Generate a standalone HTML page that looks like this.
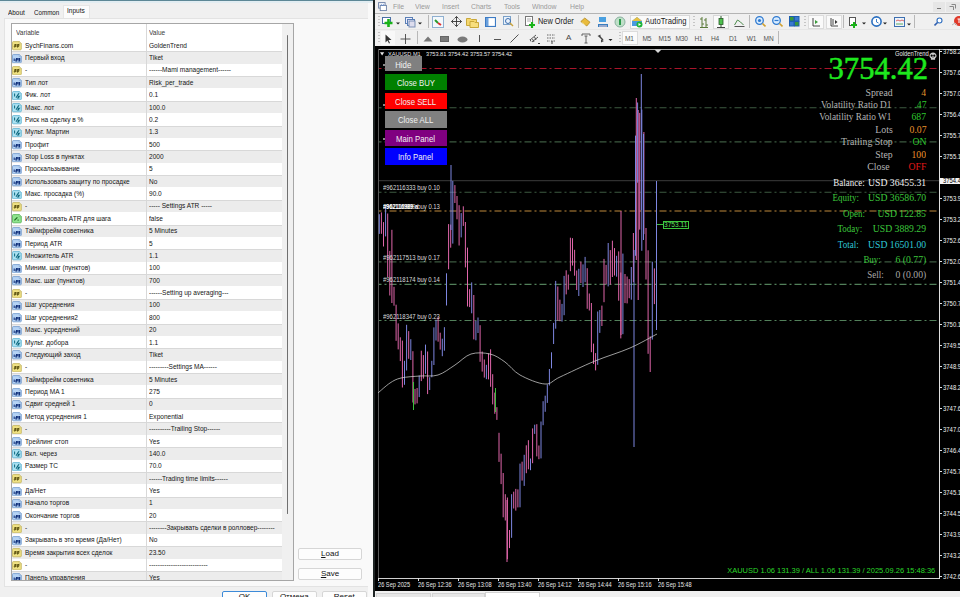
<!DOCTYPE html><html><head><meta charset="utf-8"><style>
*{margin:0;padding:0;box-sizing:border-box}
html,body{width:960px;height:597px;overflow:hidden;background:#f0f0f0;font-family:"Liberation Sans",sans-serif;}
.a{position:absolute;white-space:nowrap}
.t{position:absolute;white-space:nowrap;font-size:7.4px;color:#1e1e1e;line-height:12px}
.ic{position:absolute;width:10px;height:9px;border-radius:1.5px}
.btn{position:absolute;border:1px solid #d6d6d6;border-radius:2px;background:#fdfdfd;font-size:8px;color:#111;text-align:center}
.mb{position:absolute;top:2.2px;font-size:8px;line-height:9px;color:#9a9a9a;transform:scaleX(0.86);transform-origin:0 0}
.cb{position:absolute;color:#fff;font-size:8.4px;text-align:center;line-height:15px}
.pl{position:absolute;left:943px;font-size:7px;color:#e8e8e8;line-height:8px}
.tl{position:absolute;top:581px;font-size:7px;color:#e8e8e8;line-height:8px}
.r{position:absolute;font-family:"Liberation Serif",serif;font-size:10.5px;line-height:12px;text-align:right}
</style></head><body>

<div class="a" style="left:0;top:0;width:373px;height:597px;background:#f0f0f0">
<div class="a" style="left:0;top:0;width:373px;height:1px;background:#5d8796"></div>
<div class="a" style="left:0;top:1px;width:373px;height:2px;background:#e2edf2"></div>
<div class="a" style="left:63px;top:5px;width:27px;height:14px;background:#fbfbfb;border:1px solid #e6e6e6;border-bottom:none"></div>
<div class="a" style="left:8.00px;top:9.33px;font-size:8px;line-height:8px;color:#151515;transform:scaleX(0.8);transform-origin:0 0">About</div>
<div class="a" style="left:33.75px;top:9.33px;font-size:8px;line-height:8px;color:#151515;transform:scaleX(0.78);transform-origin:0 0">Common</div>
<div class="a" style="left:67.00px;top:7.43px;font-size:8px;line-height:8px;color:#151515;transform:scaleX(0.82);transform-origin:0 0">Inputs</div>
<div class="a" style="left:4px;top:18px;width:366px;height:569px;background:#f9f9f9;border:1px solid #e3e3e3"></div>
<div class="a" style="left:10.6px;top:23px;width:283.4px;height:558px;background:#fff;border:1px solid #a6a6a6;overflow:hidden">
<div class="a" style="left:4.00px;top:5.08px;font-size:7.7px;line-height:7.7px;color:#3a3a3a;transform:scaleX(0.85);transform-origin:0 0">Variable</div>
<div class="a" style="left:137.20px;top:5.08px;font-size:7.7px;line-height:7.7px;color:#3a3a3a;transform:scaleX(0.85);transform-origin:0 0">Value</div>
<svg class="a" style="left:0.60px;top:17.20px" width="10" height="9.5" viewBox="0 0 10 9.5"><path d="M1.3 0.6h6.2l1.8 1.8v5.6c0 .5-.3.8-.8.8H1.3c-.5 0-.8-.3-.8-.8V1.4c0-.5.3-.8.8-.8z" fill="#efe283" stroke="#c2b25a" stroke-width="0.8"/><path d="M7.3 0.7v1.9h1.9" fill="#fff" stroke="#c2b25a" stroke-width="0.6"/><path d="M2.4 3.6h1.4l-1.2 1.3h1.2l-1.4 1.4M5.2 3.6h1.4l-1.2 1.3h1.2l-1.4 1.4" stroke="#5e5412" stroke-width="1.05" fill="none"/></svg>
<div class="a" style="left:13.40px;top:17.68px;font-size:7.7px;line-height:7.7px;color:#151515;transform:scaleX(0.85);transform-origin:0 0">SychFinans.com</div>
<div class="a" style="left:137.00px;top:17.68px;font-size:7.7px;line-height:7.7px;color:#151515;transform:scaleX(0.85);transform-origin:0 0">GoldenTrend</div>
<div class="a" style="left:0;top:27.37px;width:271px;height:12.37px;background:#ececec;border-top:1px solid #d8d8d8"></div>
<svg class="a" style="left:0.60px;top:29.57px" width="10" height="9.5" viewBox="0 0 10 9.5"><path d="M1.3 0.6h6.2l1.8 1.8v5.6c0 .5-.3.8-.8.8H1.3c-.5 0-.8-.3-.8-.8V1.4c0-.5.3-.8.8-.8z" fill="#b5d3f5" stroke="#6f98cc" stroke-width="0.8"/><path d="M7.3 0.7v1.9h1.9" fill="#fff" stroke="#6f98cc" stroke-width="0.6"/><path d="M2.2 4.6v2.4M3.9 4.6h1.4v1.2h-1.4v1.2h1.4M6.3 4.6h1.4v2.4h-1.4M6.3 5.8h1.4" stroke="#10307a" stroke-width="1.05" fill="none"/></svg>
<div class="a" style="left:13.40px;top:30.05px;font-size:7.7px;line-height:7.7px;color:#151515;transform:scaleX(0.85);transform-origin:0 0">Первый вход</div>
<div class="a" style="left:137.00px;top:30.05px;font-size:7.7px;line-height:7.7px;color:#151515;transform:scaleX(0.85);transform-origin:0 0">Tiket</div>
<svg class="a" style="left:0.60px;top:41.94px" width="10" height="9.5" viewBox="0 0 10 9.5"><path d="M1.3 0.6h6.2l1.8 1.8v5.6c0 .5-.3.8-.8.8H1.3c-.5 0-.8-.3-.8-.8V1.4c0-.5.3-.8.8-.8z" fill="#efe283" stroke="#c2b25a" stroke-width="0.8"/><path d="M7.3 0.7v1.9h1.9" fill="#fff" stroke="#c2b25a" stroke-width="0.6"/><path d="M2.4 3.6h1.4l-1.2 1.3h1.2l-1.4 1.4M5.2 3.6h1.4l-1.2 1.3h1.2l-1.4 1.4" stroke="#5e5412" stroke-width="1.05" fill="none"/></svg>
<div class="a" style="left:13.40px;top:42.42px;font-size:7.7px;line-height:7.7px;color:#151515;transform:scaleX(0.85);transform-origin:0 0">-</div>
<div class="a" style="left:137.00px;top:42.42px;font-size:7.7px;line-height:7.7px;color:#151515;transform:scaleX(0.85);transform-origin:0 0">------Mami management------</div>
<div class="a" style="left:0;top:52.11px;width:271px;height:12.37px;background:#ececec;border-top:1px solid #d8d8d8"></div>
<svg class="a" style="left:0.60px;top:54.31px" width="10" height="9.5" viewBox="0 0 10 9.5"><path d="M1.3 0.6h6.2l1.8 1.8v5.6c0 .5-.3.8-.8.8H1.3c-.5 0-.8-.3-.8-.8V1.4c0-.5.3-.8.8-.8z" fill="#b5d3f5" stroke="#6f98cc" stroke-width="0.8"/><path d="M7.3 0.7v1.9h1.9" fill="#fff" stroke="#6f98cc" stroke-width="0.6"/><path d="M2.2 4.6v2.4M3.9 4.6h1.4v1.2h-1.4v1.2h1.4M6.3 4.6h1.4v2.4h-1.4M6.3 5.8h1.4" stroke="#10307a" stroke-width="1.05" fill="none"/></svg>
<div class="a" style="left:13.40px;top:54.79px;font-size:7.7px;line-height:7.7px;color:#151515;transform:scaleX(0.85);transform-origin:0 0">Тип лот</div>
<div class="a" style="left:137.00px;top:54.79px;font-size:7.7px;line-height:7.7px;color:#151515;transform:scaleX(0.85);transform-origin:0 0">Risk_per_trade</div>
<svg class="a" style="left:0.60px;top:66.68px" width="10" height="9.5" viewBox="0 0 10 9.5"><path d="M1.3 0.6h6.2l1.8 1.8v5.6c0 .5-.3.8-.8.8H1.3c-.5 0-.8-.3-.8-.8V1.4c0-.5.3-.8.8-.8z" fill="#ace2f2" stroke="#58b0d0" stroke-width="0.8"/><path d="M7.3 0.7v1.9h1.9" fill="#fff" stroke="#58b0d0" stroke-width="0.6"/><path d="M2.6 2.6v3M4 6.8l2.8-4.4M5.8 5.2h1.6l-1.6 1.8h1.6" stroke="#0f6a80" stroke-width="1.05" fill="none"/></svg>
<div class="a" style="left:13.40px;top:67.16px;font-size:7.7px;line-height:7.7px;color:#151515;transform:scaleX(0.85);transform-origin:0 0">Фик. лот</div>
<div class="a" style="left:137.00px;top:67.16px;font-size:7.7px;line-height:7.7px;color:#151515;transform:scaleX(0.85);transform-origin:0 0">0.1</div>
<div class="a" style="left:0;top:76.85px;width:271px;height:12.37px;background:#ececec;border-top:1px solid #d8d8d8"></div>
<svg class="a" style="left:0.60px;top:79.05px" width="10" height="9.5" viewBox="0 0 10 9.5"><path d="M1.3 0.6h6.2l1.8 1.8v5.6c0 .5-.3.8-.8.8H1.3c-.5 0-.8-.3-.8-.8V1.4c0-.5.3-.8.8-.8z" fill="#ace2f2" stroke="#58b0d0" stroke-width="0.8"/><path d="M7.3 0.7v1.9h1.9" fill="#fff" stroke="#58b0d0" stroke-width="0.6"/><path d="M2.6 2.6v3M4 6.8l2.8-4.4M5.8 5.2h1.6l-1.6 1.8h1.6" stroke="#0f6a80" stroke-width="1.05" fill="none"/></svg>
<div class="a" style="left:13.40px;top:79.53px;font-size:7.7px;line-height:7.7px;color:#151515;transform:scaleX(0.85);transform-origin:0 0">Макс. лот</div>
<div class="a" style="left:137.00px;top:79.53px;font-size:7.7px;line-height:7.7px;color:#151515;transform:scaleX(0.85);transform-origin:0 0">100.0</div>
<svg class="a" style="left:0.60px;top:91.42px" width="10" height="9.5" viewBox="0 0 10 9.5"><path d="M1.3 0.6h6.2l1.8 1.8v5.6c0 .5-.3.8-.8.8H1.3c-.5 0-.8-.3-.8-.8V1.4c0-.5.3-.8.8-.8z" fill="#ace2f2" stroke="#58b0d0" stroke-width="0.8"/><path d="M7.3 0.7v1.9h1.9" fill="#fff" stroke="#58b0d0" stroke-width="0.6"/><path d="M2.6 2.6v3M4 6.8l2.8-4.4M5.8 5.2h1.6l-1.6 1.8h1.6" stroke="#0f6a80" stroke-width="1.05" fill="none"/></svg>
<div class="a" style="left:13.40px;top:91.90px;font-size:7.7px;line-height:7.7px;color:#151515;transform:scaleX(0.85);transform-origin:0 0">Риск на сделку в %</div>
<div class="a" style="left:137.00px;top:91.90px;font-size:7.7px;line-height:7.7px;color:#151515;transform:scaleX(0.85);transform-origin:0 0">0.2</div>
<div class="a" style="left:0;top:101.59px;width:271px;height:12.37px;background:#ececec;border-top:1px solid #d8d8d8"></div>
<svg class="a" style="left:0.60px;top:103.79px" width="10" height="9.5" viewBox="0 0 10 9.5"><path d="M1.3 0.6h6.2l1.8 1.8v5.6c0 .5-.3.8-.8.8H1.3c-.5 0-.8-.3-.8-.8V1.4c0-.5.3-.8.8-.8z" fill="#ace2f2" stroke="#58b0d0" stroke-width="0.8"/><path d="M7.3 0.7v1.9h1.9" fill="#fff" stroke="#58b0d0" stroke-width="0.6"/><path d="M2.6 2.6v3M4 6.8l2.8-4.4M5.8 5.2h1.6l-1.6 1.8h1.6" stroke="#0f6a80" stroke-width="1.05" fill="none"/></svg>
<div class="a" style="left:13.40px;top:104.27px;font-size:7.7px;line-height:7.7px;color:#151515;transform:scaleX(0.85);transform-origin:0 0">Мульт. Мартин</div>
<div class="a" style="left:137.00px;top:104.27px;font-size:7.7px;line-height:7.7px;color:#151515;transform:scaleX(0.85);transform-origin:0 0">1.3</div>
<svg class="a" style="left:0.60px;top:116.16px" width="10" height="9.5" viewBox="0 0 10 9.5"><path d="M1.3 0.6h6.2l1.8 1.8v5.6c0 .5-.3.8-.8.8H1.3c-.5 0-.8-.3-.8-.8V1.4c0-.5.3-.8.8-.8z" fill="#b5d3f5" stroke="#6f98cc" stroke-width="0.8"/><path d="M7.3 0.7v1.9h1.9" fill="#fff" stroke="#6f98cc" stroke-width="0.6"/><path d="M2.2 4.6v2.4M3.9 4.6h1.4v1.2h-1.4v1.2h1.4M6.3 4.6h1.4v2.4h-1.4M6.3 5.8h1.4" stroke="#10307a" stroke-width="1.05" fill="none"/></svg>
<div class="a" style="left:13.40px;top:116.64px;font-size:7.7px;line-height:7.7px;color:#151515;transform:scaleX(0.85);transform-origin:0 0">Профит</div>
<div class="a" style="left:137.00px;top:116.64px;font-size:7.7px;line-height:7.7px;color:#151515;transform:scaleX(0.85);transform-origin:0 0">500</div>
<div class="a" style="left:0;top:126.33px;width:271px;height:12.37px;background:#ececec;border-top:1px solid #d8d8d8"></div>
<svg class="a" style="left:0.60px;top:128.53px" width="10" height="9.5" viewBox="0 0 10 9.5"><path d="M1.3 0.6h6.2l1.8 1.8v5.6c0 .5-.3.8-.8.8H1.3c-.5 0-.8-.3-.8-.8V1.4c0-.5.3-.8.8-.8z" fill="#b5d3f5" stroke="#6f98cc" stroke-width="0.8"/><path d="M7.3 0.7v1.9h1.9" fill="#fff" stroke="#6f98cc" stroke-width="0.6"/><path d="M2.2 4.6v2.4M3.9 4.6h1.4v1.2h-1.4v1.2h1.4M6.3 4.6h1.4v2.4h-1.4M6.3 5.8h1.4" stroke="#10307a" stroke-width="1.05" fill="none"/></svg>
<div class="a" style="left:13.40px;top:129.01px;font-size:7.7px;line-height:7.7px;color:#151515;transform:scaleX(0.85);transform-origin:0 0">Stop Loss в пунктах</div>
<div class="a" style="left:137.00px;top:129.01px;font-size:7.7px;line-height:7.7px;color:#151515;transform:scaleX(0.85);transform-origin:0 0">2000</div>
<svg class="a" style="left:0.60px;top:140.90px" width="10" height="9.5" viewBox="0 0 10 9.5"><path d="M1.3 0.6h6.2l1.8 1.8v5.6c0 .5-.3.8-.8.8H1.3c-.5 0-.8-.3-.8-.8V1.4c0-.5.3-.8.8-.8z" fill="#b5d3f5" stroke="#6f98cc" stroke-width="0.8"/><path d="M7.3 0.7v1.9h1.9" fill="#fff" stroke="#6f98cc" stroke-width="0.6"/><path d="M2.2 4.6v2.4M3.9 4.6h1.4v1.2h-1.4v1.2h1.4M6.3 4.6h1.4v2.4h-1.4M6.3 5.8h1.4" stroke="#10307a" stroke-width="1.05" fill="none"/></svg>
<div class="a" style="left:13.40px;top:141.38px;font-size:7.7px;line-height:7.7px;color:#151515;transform:scaleX(0.85);transform-origin:0 0">Проскальзывание</div>
<div class="a" style="left:137.00px;top:141.38px;font-size:7.7px;line-height:7.7px;color:#151515;transform:scaleX(0.85);transform-origin:0 0">5</div>
<div class="a" style="left:0;top:151.07px;width:271px;height:12.37px;background:#ececec;border-top:1px solid #d8d8d8"></div>
<svg class="a" style="left:0.60px;top:153.27px" width="10" height="9.5" viewBox="0 0 10 9.5"><path d="M1.3 0.6h6.2l1.8 1.8v5.6c0 .5-.3.8-.8.8H1.3c-.5 0-.8-.3-.8-.8V1.4c0-.5.3-.8.8-.8z" fill="#b5d3f5" stroke="#6f98cc" stroke-width="0.8"/><path d="M7.3 0.7v1.9h1.9" fill="#fff" stroke="#6f98cc" stroke-width="0.6"/><path d="M2.2 4.6v2.4M3.9 4.6h1.4v1.2h-1.4v1.2h1.4M6.3 4.6h1.4v2.4h-1.4M6.3 5.8h1.4" stroke="#10307a" stroke-width="1.05" fill="none"/></svg>
<div class="a" style="left:13.40px;top:153.75px;font-size:7.7px;line-height:7.7px;color:#151515;transform:scaleX(0.85);transform-origin:0 0">Использовать защиту по просадке</div>
<div class="a" style="left:137.00px;top:153.75px;font-size:7.7px;line-height:7.7px;color:#151515;transform:scaleX(0.85);transform-origin:0 0">No</div>
<svg class="a" style="left:0.60px;top:165.64px" width="10" height="9.5" viewBox="0 0 10 9.5"><path d="M1.3 0.6h6.2l1.8 1.8v5.6c0 .5-.3.8-.8.8H1.3c-.5 0-.8-.3-.8-.8V1.4c0-.5.3-.8.8-.8z" fill="#ace2f2" stroke="#58b0d0" stroke-width="0.8"/><path d="M7.3 0.7v1.9h1.9" fill="#fff" stroke="#58b0d0" stroke-width="0.6"/><path d="M2.6 2.6v3M4 6.8l2.8-4.4M5.8 5.2h1.6l-1.6 1.8h1.6" stroke="#0f6a80" stroke-width="1.05" fill="none"/></svg>
<div class="a" style="left:13.40px;top:166.12px;font-size:7.7px;line-height:7.7px;color:#151515;transform:scaleX(0.85);transform-origin:0 0">Макс. просадка (%)</div>
<div class="a" style="left:137.00px;top:166.12px;font-size:7.7px;line-height:7.7px;color:#151515;transform:scaleX(0.85);transform-origin:0 0">90.0</div>
<div class="a" style="left:0;top:175.81px;width:271px;height:12.37px;background:#ececec;border-top:1px solid #d8d8d8"></div>
<svg class="a" style="left:0.60px;top:178.01px" width="10" height="9.5" viewBox="0 0 10 9.5"><path d="M1.3 0.6h6.2l1.8 1.8v5.6c0 .5-.3.8-.8.8H1.3c-.5 0-.8-.3-.8-.8V1.4c0-.5.3-.8.8-.8z" fill="#efe283" stroke="#c2b25a" stroke-width="0.8"/><path d="M7.3 0.7v1.9h1.9" fill="#fff" stroke="#c2b25a" stroke-width="0.6"/><path d="M2.4 3.6h1.4l-1.2 1.3h1.2l-1.4 1.4M5.2 3.6h1.4l-1.2 1.3h1.2l-1.4 1.4" stroke="#5e5412" stroke-width="1.05" fill="none"/></svg>
<div class="a" style="left:13.40px;top:178.49px;font-size:7.7px;line-height:7.7px;color:#151515;transform:scaleX(0.85);transform-origin:0 0">-</div>
<div class="a" style="left:137.00px;top:178.49px;font-size:7.7px;line-height:7.7px;color:#151515;transform:scaleX(0.85);transform-origin:0 0">----- Settings ATR -----</div>
<svg class="a" style="left:0.60px;top:190.38px" width="10" height="9.5" viewBox="0 0 10 9.5"><path d="M1.3 0.6h6.2l1.8 1.8v5.6c0 .5-.3.8-.8.8H1.3c-.5 0-.8-.3-.8-.8V1.4c0-.5.3-.8.8-.8z" fill="#8fe48f" stroke="#4fb04f" stroke-width="0.8"/><path d="M7.3 0.7v1.9h1.9" fill="#fff" stroke="#4fb04f" stroke-width="0.6"/><path d="M2.4 6.4l3-3M5.6 6.2h1" stroke="#1a6a1a" stroke-width="1.2" fill="none"/></svg>
<div class="a" style="left:13.40px;top:190.86px;font-size:7.7px;line-height:7.7px;color:#151515;transform:scaleX(0.85);transform-origin:0 0">Использовать ATR для шага</div>
<div class="a" style="left:137.00px;top:190.86px;font-size:7.7px;line-height:7.7px;color:#151515;transform:scaleX(0.85);transform-origin:0 0">false</div>
<div class="a" style="left:0;top:200.55px;width:271px;height:12.37px;background:#ececec;border-top:1px solid #d8d8d8"></div>
<svg class="a" style="left:0.60px;top:202.75px" width="10" height="9.5" viewBox="0 0 10 9.5"><path d="M1.3 0.6h6.2l1.8 1.8v5.6c0 .5-.3.8-.8.8H1.3c-.5 0-.8-.3-.8-.8V1.4c0-.5.3-.8.8-.8z" fill="#b5d3f5" stroke="#6f98cc" stroke-width="0.8"/><path d="M7.3 0.7v1.9h1.9" fill="#fff" stroke="#6f98cc" stroke-width="0.6"/><path d="M2.2 4.6v2.4M3.9 4.6h1.4v1.2h-1.4v1.2h1.4M6.3 4.6h1.4v2.4h-1.4M6.3 5.8h1.4" stroke="#10307a" stroke-width="1.05" fill="none"/></svg>
<div class="a" style="left:13.40px;top:203.23px;font-size:7.7px;line-height:7.7px;color:#151515;transform:scaleX(0.85);transform-origin:0 0">Таймфрейм советника</div>
<div class="a" style="left:137.00px;top:203.23px;font-size:7.7px;line-height:7.7px;color:#151515;transform:scaleX(0.85);transform-origin:0 0">5 Minutes</div>
<svg class="a" style="left:0.60px;top:215.12px" width="10" height="9.5" viewBox="0 0 10 9.5"><path d="M1.3 0.6h6.2l1.8 1.8v5.6c0 .5-.3.8-.8.8H1.3c-.5 0-.8-.3-.8-.8V1.4c0-.5.3-.8.8-.8z" fill="#b5d3f5" stroke="#6f98cc" stroke-width="0.8"/><path d="M7.3 0.7v1.9h1.9" fill="#fff" stroke="#6f98cc" stroke-width="0.6"/><path d="M2.2 4.6v2.4M3.9 4.6h1.4v1.2h-1.4v1.2h1.4M6.3 4.6h1.4v2.4h-1.4M6.3 5.8h1.4" stroke="#10307a" stroke-width="1.05" fill="none"/></svg>
<div class="a" style="left:13.40px;top:215.60px;font-size:7.7px;line-height:7.7px;color:#151515;transform:scaleX(0.85);transform-origin:0 0">Период ATR</div>
<div class="a" style="left:137.00px;top:215.60px;font-size:7.7px;line-height:7.7px;color:#151515;transform:scaleX(0.85);transform-origin:0 0">5</div>
<div class="a" style="left:0;top:225.29px;width:271px;height:12.37px;background:#ececec;border-top:1px solid #d8d8d8"></div>
<svg class="a" style="left:0.60px;top:227.49px" width="10" height="9.5" viewBox="0 0 10 9.5"><path d="M1.3 0.6h6.2l1.8 1.8v5.6c0 .5-.3.8-.8.8H1.3c-.5 0-.8-.3-.8-.8V1.4c0-.5.3-.8.8-.8z" fill="#ace2f2" stroke="#58b0d0" stroke-width="0.8"/><path d="M7.3 0.7v1.9h1.9" fill="#fff" stroke="#58b0d0" stroke-width="0.6"/><path d="M2.6 2.6v3M4 6.8l2.8-4.4M5.8 5.2h1.6l-1.6 1.8h1.6" stroke="#0f6a80" stroke-width="1.05" fill="none"/></svg>
<div class="a" style="left:13.40px;top:227.97px;font-size:7.7px;line-height:7.7px;color:#151515;transform:scaleX(0.85);transform-origin:0 0">Множитель ATR</div>
<div class="a" style="left:137.00px;top:227.97px;font-size:7.7px;line-height:7.7px;color:#151515;transform:scaleX(0.85);transform-origin:0 0">1.1</div>
<svg class="a" style="left:0.60px;top:239.86px" width="10" height="9.5" viewBox="0 0 10 9.5"><path d="M1.3 0.6h6.2l1.8 1.8v5.6c0 .5-.3.8-.8.8H1.3c-.5 0-.8-.3-.8-.8V1.4c0-.5.3-.8.8-.8z" fill="#b5d3f5" stroke="#6f98cc" stroke-width="0.8"/><path d="M7.3 0.7v1.9h1.9" fill="#fff" stroke="#6f98cc" stroke-width="0.6"/><path d="M2.2 4.6v2.4M3.9 4.6h1.4v1.2h-1.4v1.2h1.4M6.3 4.6h1.4v2.4h-1.4M6.3 5.8h1.4" stroke="#10307a" stroke-width="1.05" fill="none"/></svg>
<div class="a" style="left:13.40px;top:240.34px;font-size:7.7px;line-height:7.7px;color:#151515;transform:scaleX(0.85);transform-origin:0 0">Миним. шаг (пунктов)</div>
<div class="a" style="left:137.00px;top:240.34px;font-size:7.7px;line-height:7.7px;color:#151515;transform:scaleX(0.85);transform-origin:0 0">100</div>
<div class="a" style="left:0;top:250.03px;width:271px;height:12.37px;background:#ececec;border-top:1px solid #d8d8d8"></div>
<svg class="a" style="left:0.60px;top:252.23px" width="10" height="9.5" viewBox="0 0 10 9.5"><path d="M1.3 0.6h6.2l1.8 1.8v5.6c0 .5-.3.8-.8.8H1.3c-.5 0-.8-.3-.8-.8V1.4c0-.5.3-.8.8-.8z" fill="#b5d3f5" stroke="#6f98cc" stroke-width="0.8"/><path d="M7.3 0.7v1.9h1.9" fill="#fff" stroke="#6f98cc" stroke-width="0.6"/><path d="M2.2 4.6v2.4M3.9 4.6h1.4v1.2h-1.4v1.2h1.4M6.3 4.6h1.4v2.4h-1.4M6.3 5.8h1.4" stroke="#10307a" stroke-width="1.05" fill="none"/></svg>
<div class="a" style="left:13.40px;top:252.71px;font-size:7.7px;line-height:7.7px;color:#151515;transform:scaleX(0.85);transform-origin:0 0">Макс. шаг (пунктов)</div>
<div class="a" style="left:137.00px;top:252.71px;font-size:7.7px;line-height:7.7px;color:#151515;transform:scaleX(0.85);transform-origin:0 0">700</div>
<svg class="a" style="left:0.60px;top:264.60px" width="10" height="9.5" viewBox="0 0 10 9.5"><path d="M1.3 0.6h6.2l1.8 1.8v5.6c0 .5-.3.8-.8.8H1.3c-.5 0-.8-.3-.8-.8V1.4c0-.5.3-.8.8-.8z" fill="#efe283" stroke="#c2b25a" stroke-width="0.8"/><path d="M7.3 0.7v1.9h1.9" fill="#fff" stroke="#c2b25a" stroke-width="0.6"/><path d="M2.4 3.6h1.4l-1.2 1.3h1.2l-1.4 1.4M5.2 3.6h1.4l-1.2 1.3h1.2l-1.4 1.4" stroke="#5e5412" stroke-width="1.05" fill="none"/></svg>
<div class="a" style="left:13.40px;top:265.08px;font-size:7.7px;line-height:7.7px;color:#151515;transform:scaleX(0.85);transform-origin:0 0">-</div>
<div class="a" style="left:137.00px;top:265.08px;font-size:7.7px;line-height:7.7px;color:#151515;transform:scaleX(0.85);transform-origin:0 0">------Setting up averaging---</div>
<div class="a" style="left:0;top:274.77px;width:271px;height:12.37px;background:#ececec;border-top:1px solid #d8d8d8"></div>
<svg class="a" style="left:0.60px;top:276.97px" width="10" height="9.5" viewBox="0 0 10 9.5"><path d="M1.3 0.6h6.2l1.8 1.8v5.6c0 .5-.3.8-.8.8H1.3c-.5 0-.8-.3-.8-.8V1.4c0-.5.3-.8.8-.8z" fill="#b5d3f5" stroke="#6f98cc" stroke-width="0.8"/><path d="M7.3 0.7v1.9h1.9" fill="#fff" stroke="#6f98cc" stroke-width="0.6"/><path d="M2.2 4.6v2.4M3.9 4.6h1.4v1.2h-1.4v1.2h1.4M6.3 4.6h1.4v2.4h-1.4M6.3 5.8h1.4" stroke="#10307a" stroke-width="1.05" fill="none"/></svg>
<div class="a" style="left:13.40px;top:277.45px;font-size:7.7px;line-height:7.7px;color:#151515;transform:scaleX(0.85);transform-origin:0 0">Шаг усреднения</div>
<div class="a" style="left:137.00px;top:277.45px;font-size:7.7px;line-height:7.7px;color:#151515;transform:scaleX(0.85);transform-origin:0 0">100</div>
<svg class="a" style="left:0.60px;top:289.34px" width="10" height="9.5" viewBox="0 0 10 9.5"><path d="M1.3 0.6h6.2l1.8 1.8v5.6c0 .5-.3.8-.8.8H1.3c-.5 0-.8-.3-.8-.8V1.4c0-.5.3-.8.8-.8z" fill="#b5d3f5" stroke="#6f98cc" stroke-width="0.8"/><path d="M7.3 0.7v1.9h1.9" fill="#fff" stroke="#6f98cc" stroke-width="0.6"/><path d="M2.2 4.6v2.4M3.9 4.6h1.4v1.2h-1.4v1.2h1.4M6.3 4.6h1.4v2.4h-1.4M6.3 5.8h1.4" stroke="#10307a" stroke-width="1.05" fill="none"/></svg>
<div class="a" style="left:13.40px;top:289.82px;font-size:7.7px;line-height:7.7px;color:#151515;transform:scaleX(0.85);transform-origin:0 0">Шаг усреднения2</div>
<div class="a" style="left:137.00px;top:289.82px;font-size:7.7px;line-height:7.7px;color:#151515;transform:scaleX(0.85);transform-origin:0 0">800</div>
<div class="a" style="left:0;top:299.51px;width:271px;height:12.37px;background:#ececec;border-top:1px solid #d8d8d8"></div>
<svg class="a" style="left:0.60px;top:301.71px" width="10" height="9.5" viewBox="0 0 10 9.5"><path d="M1.3 0.6h6.2l1.8 1.8v5.6c0 .5-.3.8-.8.8H1.3c-.5 0-.8-.3-.8-.8V1.4c0-.5.3-.8.8-.8z" fill="#b5d3f5" stroke="#6f98cc" stroke-width="0.8"/><path d="M7.3 0.7v1.9h1.9" fill="#fff" stroke="#6f98cc" stroke-width="0.6"/><path d="M2.2 4.6v2.4M3.9 4.6h1.4v1.2h-1.4v1.2h1.4M6.3 4.6h1.4v2.4h-1.4M6.3 5.8h1.4" stroke="#10307a" stroke-width="1.05" fill="none"/></svg>
<div class="a" style="left:13.40px;top:302.19px;font-size:7.7px;line-height:7.7px;color:#151515;transform:scaleX(0.85);transform-origin:0 0">Макс. усреднений</div>
<div class="a" style="left:137.00px;top:302.19px;font-size:7.7px;line-height:7.7px;color:#151515;transform:scaleX(0.85);transform-origin:0 0">20</div>
<svg class="a" style="left:0.60px;top:314.08px" width="10" height="9.5" viewBox="0 0 10 9.5"><path d="M1.3 0.6h6.2l1.8 1.8v5.6c0 .5-.3.8-.8.8H1.3c-.5 0-.8-.3-.8-.8V1.4c0-.5.3-.8.8-.8z" fill="#ace2f2" stroke="#58b0d0" stroke-width="0.8"/><path d="M7.3 0.7v1.9h1.9" fill="#fff" stroke="#58b0d0" stroke-width="0.6"/><path d="M2.6 2.6v3M4 6.8l2.8-4.4M5.8 5.2h1.6l-1.6 1.8h1.6" stroke="#0f6a80" stroke-width="1.05" fill="none"/></svg>
<div class="a" style="left:13.40px;top:314.56px;font-size:7.7px;line-height:7.7px;color:#151515;transform:scaleX(0.85);transform-origin:0 0">Мульт. добора</div>
<div class="a" style="left:137.00px;top:314.56px;font-size:7.7px;line-height:7.7px;color:#151515;transform:scaleX(0.85);transform-origin:0 0">1.1</div>
<div class="a" style="left:0;top:324.25px;width:271px;height:12.37px;background:#ececec;border-top:1px solid #d8d8d8"></div>
<svg class="a" style="left:0.60px;top:326.45px" width="10" height="9.5" viewBox="0 0 10 9.5"><path d="M1.3 0.6h6.2l1.8 1.8v5.6c0 .5-.3.8-.8.8H1.3c-.5 0-.8-.3-.8-.8V1.4c0-.5.3-.8.8-.8z" fill="#b5d3f5" stroke="#6f98cc" stroke-width="0.8"/><path d="M7.3 0.7v1.9h1.9" fill="#fff" stroke="#6f98cc" stroke-width="0.6"/><path d="M2.2 4.6v2.4M3.9 4.6h1.4v1.2h-1.4v1.2h1.4M6.3 4.6h1.4v2.4h-1.4M6.3 5.8h1.4" stroke="#10307a" stroke-width="1.05" fill="none"/></svg>
<div class="a" style="left:13.40px;top:326.93px;font-size:7.7px;line-height:7.7px;color:#151515;transform:scaleX(0.85);transform-origin:0 0">Следующий заход</div>
<div class="a" style="left:137.00px;top:326.93px;font-size:7.7px;line-height:7.7px;color:#151515;transform:scaleX(0.85);transform-origin:0 0">Tiket</div>
<svg class="a" style="left:0.60px;top:338.82px" width="10" height="9.5" viewBox="0 0 10 9.5"><path d="M1.3 0.6h6.2l1.8 1.8v5.6c0 .5-.3.8-.8.8H1.3c-.5 0-.8-.3-.8-.8V1.4c0-.5.3-.8.8-.8z" fill="#efe283" stroke="#c2b25a" stroke-width="0.8"/><path d="M7.3 0.7v1.9h1.9" fill="#fff" stroke="#c2b25a" stroke-width="0.6"/><path d="M2.4 3.6h1.4l-1.2 1.3h1.2l-1.4 1.4M5.2 3.6h1.4l-1.2 1.3h1.2l-1.4 1.4" stroke="#5e5412" stroke-width="1.05" fill="none"/></svg>
<div class="a" style="left:13.40px;top:339.30px;font-size:7.7px;line-height:7.7px;color:#151515;transform:scaleX(0.85);transform-origin:0 0">-</div>
<div class="a" style="left:137.00px;top:339.30px;font-size:7.7px;line-height:7.7px;color:#151515;transform:scaleX(0.85);transform-origin:0 0">---------Settings MA------</div>
<div class="a" style="left:0;top:348.99px;width:271px;height:12.37px;background:#ececec;border-top:1px solid #d8d8d8"></div>
<svg class="a" style="left:0.60px;top:351.19px" width="10" height="9.5" viewBox="0 0 10 9.5"><path d="M1.3 0.6h6.2l1.8 1.8v5.6c0 .5-.3.8-.8.8H1.3c-.5 0-.8-.3-.8-.8V1.4c0-.5.3-.8.8-.8z" fill="#b5d3f5" stroke="#6f98cc" stroke-width="0.8"/><path d="M7.3 0.7v1.9h1.9" fill="#fff" stroke="#6f98cc" stroke-width="0.6"/><path d="M2.2 4.6v2.4M3.9 4.6h1.4v1.2h-1.4v1.2h1.4M6.3 4.6h1.4v2.4h-1.4M6.3 5.8h1.4" stroke="#10307a" stroke-width="1.05" fill="none"/></svg>
<div class="a" style="left:13.40px;top:351.67px;font-size:7.7px;line-height:7.7px;color:#151515;transform:scaleX(0.85);transform-origin:0 0">Таймфрейм советника</div>
<div class="a" style="left:137.00px;top:351.67px;font-size:7.7px;line-height:7.7px;color:#151515;transform:scaleX(0.85);transform-origin:0 0">5 Minutes</div>
<svg class="a" style="left:0.60px;top:363.56px" width="10" height="9.5" viewBox="0 0 10 9.5"><path d="M1.3 0.6h6.2l1.8 1.8v5.6c0 .5-.3.8-.8.8H1.3c-.5 0-.8-.3-.8-.8V1.4c0-.5.3-.8.8-.8z" fill="#b5d3f5" stroke="#6f98cc" stroke-width="0.8"/><path d="M7.3 0.7v1.9h1.9" fill="#fff" stroke="#6f98cc" stroke-width="0.6"/><path d="M2.2 4.6v2.4M3.9 4.6h1.4v1.2h-1.4v1.2h1.4M6.3 4.6h1.4v2.4h-1.4M6.3 5.8h1.4" stroke="#10307a" stroke-width="1.05" fill="none"/></svg>
<div class="a" style="left:13.40px;top:364.04px;font-size:7.7px;line-height:7.7px;color:#151515;transform:scaleX(0.85);transform-origin:0 0">Период MA 1</div>
<div class="a" style="left:137.00px;top:364.04px;font-size:7.7px;line-height:7.7px;color:#151515;transform:scaleX(0.85);transform-origin:0 0">275</div>
<div class="a" style="left:0;top:373.73px;width:271px;height:12.37px;background:#ececec;border-top:1px solid #d8d8d8"></div>
<svg class="a" style="left:0.60px;top:375.93px" width="10" height="9.5" viewBox="0 0 10 9.5"><path d="M1.3 0.6h6.2l1.8 1.8v5.6c0 .5-.3.8-.8.8H1.3c-.5 0-.8-.3-.8-.8V1.4c0-.5.3-.8.8-.8z" fill="#b5d3f5" stroke="#6f98cc" stroke-width="0.8"/><path d="M7.3 0.7v1.9h1.9" fill="#fff" stroke="#6f98cc" stroke-width="0.6"/><path d="M2.2 4.6v2.4M3.9 4.6h1.4v1.2h-1.4v1.2h1.4M6.3 4.6h1.4v2.4h-1.4M6.3 5.8h1.4" stroke="#10307a" stroke-width="1.05" fill="none"/></svg>
<div class="a" style="left:13.40px;top:376.41px;font-size:7.7px;line-height:7.7px;color:#151515;transform:scaleX(0.85);transform-origin:0 0">Сдвиг средней 1</div>
<div class="a" style="left:137.00px;top:376.41px;font-size:7.7px;line-height:7.7px;color:#151515;transform:scaleX(0.85);transform-origin:0 0">0</div>
<svg class="a" style="left:0.60px;top:388.30px" width="10" height="9.5" viewBox="0 0 10 9.5"><path d="M1.3 0.6h6.2l1.8 1.8v5.6c0 .5-.3.8-.8.8H1.3c-.5 0-.8-.3-.8-.8V1.4c0-.5.3-.8.8-.8z" fill="#b5d3f5" stroke="#6f98cc" stroke-width="0.8"/><path d="M7.3 0.7v1.9h1.9" fill="#fff" stroke="#6f98cc" stroke-width="0.6"/><path d="M2.2 4.6v2.4M3.9 4.6h1.4v1.2h-1.4v1.2h1.4M6.3 4.6h1.4v2.4h-1.4M6.3 5.8h1.4" stroke="#10307a" stroke-width="1.05" fill="none"/></svg>
<div class="a" style="left:13.40px;top:388.78px;font-size:7.7px;line-height:7.7px;color:#151515;transform:scaleX(0.85);transform-origin:0 0">Метод усреднения 1</div>
<div class="a" style="left:137.00px;top:388.78px;font-size:7.7px;line-height:7.7px;color:#151515;transform:scaleX(0.85);transform-origin:0 0">Exponential</div>
<div class="a" style="left:0;top:398.47px;width:271px;height:12.37px;background:#ececec;border-top:1px solid #d8d8d8"></div>
<svg class="a" style="left:0.60px;top:400.67px" width="10" height="9.5" viewBox="0 0 10 9.5"><path d="M1.3 0.6h6.2l1.8 1.8v5.6c0 .5-.3.8-.8.8H1.3c-.5 0-.8-.3-.8-.8V1.4c0-.5.3-.8.8-.8z" fill="#efe283" stroke="#c2b25a" stroke-width="0.8"/><path d="M7.3 0.7v1.9h1.9" fill="#fff" stroke="#c2b25a" stroke-width="0.6"/><path d="M2.4 3.6h1.4l-1.2 1.3h1.2l-1.4 1.4M5.2 3.6h1.4l-1.2 1.3h1.2l-1.4 1.4" stroke="#5e5412" stroke-width="1.05" fill="none"/></svg>
<div class="a" style="left:13.40px;top:401.15px;font-size:7.7px;line-height:7.7px;color:#151515;transform:scaleX(0.85);transform-origin:0 0">-</div>
<div class="a" style="left:137.00px;top:401.15px;font-size:7.7px;line-height:7.7px;color:#151515;transform:scaleX(0.85);transform-origin:0 0">----------Trailing Stop------</div>
<svg class="a" style="left:0.60px;top:413.04px" width="10" height="9.5" viewBox="0 0 10 9.5"><path d="M1.3 0.6h6.2l1.8 1.8v5.6c0 .5-.3.8-.8.8H1.3c-.5 0-.8-.3-.8-.8V1.4c0-.5.3-.8.8-.8z" fill="#b5d3f5" stroke="#6f98cc" stroke-width="0.8"/><path d="M7.3 0.7v1.9h1.9" fill="#fff" stroke="#6f98cc" stroke-width="0.6"/><path d="M2.2 4.6v2.4M3.9 4.6h1.4v1.2h-1.4v1.2h1.4M6.3 4.6h1.4v2.4h-1.4M6.3 5.8h1.4" stroke="#10307a" stroke-width="1.05" fill="none"/></svg>
<div class="a" style="left:13.40px;top:413.52px;font-size:7.7px;line-height:7.7px;color:#151515;transform:scaleX(0.85);transform-origin:0 0">Трейлинг стоп</div>
<div class="a" style="left:137.00px;top:413.52px;font-size:7.7px;line-height:7.7px;color:#151515;transform:scaleX(0.85);transform-origin:0 0">Yes</div>
<div class="a" style="left:0;top:423.21px;width:271px;height:12.37px;background:#ececec;border-top:1px solid #d8d8d8"></div>
<svg class="a" style="left:0.60px;top:425.41px" width="10" height="9.5" viewBox="0 0 10 9.5"><path d="M1.3 0.6h6.2l1.8 1.8v5.6c0 .5-.3.8-.8.8H1.3c-.5 0-.8-.3-.8-.8V1.4c0-.5.3-.8.8-.8z" fill="#ace2f2" stroke="#58b0d0" stroke-width="0.8"/><path d="M7.3 0.7v1.9h1.9" fill="#fff" stroke="#58b0d0" stroke-width="0.6"/><path d="M2.6 2.6v3M4 6.8l2.8-4.4M5.8 5.2h1.6l-1.6 1.8h1.6" stroke="#0f6a80" stroke-width="1.05" fill="none"/></svg>
<div class="a" style="left:13.40px;top:425.89px;font-size:7.7px;line-height:7.7px;color:#151515;transform:scaleX(0.85);transform-origin:0 0">Вкл. через</div>
<div class="a" style="left:137.00px;top:425.89px;font-size:7.7px;line-height:7.7px;color:#151515;transform:scaleX(0.85);transform-origin:0 0">140.0</div>
<svg class="a" style="left:0.60px;top:437.78px" width="10" height="9.5" viewBox="0 0 10 9.5"><path d="M1.3 0.6h6.2l1.8 1.8v5.6c0 .5-.3.8-.8.8H1.3c-.5 0-.8-.3-.8-.8V1.4c0-.5.3-.8.8-.8z" fill="#ace2f2" stroke="#58b0d0" stroke-width="0.8"/><path d="M7.3 0.7v1.9h1.9" fill="#fff" stroke="#58b0d0" stroke-width="0.6"/><path d="M2.6 2.6v3M4 6.8l2.8-4.4M5.8 5.2h1.6l-1.6 1.8h1.6" stroke="#0f6a80" stroke-width="1.05" fill="none"/></svg>
<div class="a" style="left:13.40px;top:438.26px;font-size:7.7px;line-height:7.7px;color:#151515;transform:scaleX(0.85);transform-origin:0 0">Размер ТС</div>
<div class="a" style="left:137.00px;top:438.26px;font-size:7.7px;line-height:7.7px;color:#151515;transform:scaleX(0.85);transform-origin:0 0">70.0</div>
<div class="a" style="left:0;top:447.95px;width:271px;height:12.37px;background:#ececec;border-top:1px solid #d8d8d8"></div>
<svg class="a" style="left:0.60px;top:450.15px" width="10" height="9.5" viewBox="0 0 10 9.5"><path d="M1.3 0.6h6.2l1.8 1.8v5.6c0 .5-.3.8-.8.8H1.3c-.5 0-.8-.3-.8-.8V1.4c0-.5.3-.8.8-.8z" fill="#efe283" stroke="#c2b25a" stroke-width="0.8"/><path d="M7.3 0.7v1.9h1.9" fill="#fff" stroke="#c2b25a" stroke-width="0.6"/><path d="M2.4 3.6h1.4l-1.2 1.3h1.2l-1.4 1.4M5.2 3.6h1.4l-1.2 1.3h1.2l-1.4 1.4" stroke="#5e5412" stroke-width="1.05" fill="none"/></svg>
<div class="a" style="left:13.40px;top:450.63px;font-size:7.7px;line-height:7.7px;color:#151515;transform:scaleX(0.85);transform-origin:0 0">-</div>
<div class="a" style="left:137.00px;top:450.63px;font-size:7.7px;line-height:7.7px;color:#151515;transform:scaleX(0.85);transform-origin:0 0">------Trading time limits------</div>
<svg class="a" style="left:0.60px;top:462.52px" width="10" height="9.5" viewBox="0 0 10 9.5"><path d="M1.3 0.6h6.2l1.8 1.8v5.6c0 .5-.3.8-.8.8H1.3c-.5 0-.8-.3-.8-.8V1.4c0-.5.3-.8.8-.8z" fill="#b5d3f5" stroke="#6f98cc" stroke-width="0.8"/><path d="M7.3 0.7v1.9h1.9" fill="#fff" stroke="#6f98cc" stroke-width="0.6"/><path d="M2.2 4.6v2.4M3.9 4.6h1.4v1.2h-1.4v1.2h1.4M6.3 4.6h1.4v2.4h-1.4M6.3 5.8h1.4" stroke="#10307a" stroke-width="1.05" fill="none"/></svg>
<div class="a" style="left:13.40px;top:463.00px;font-size:7.7px;line-height:7.7px;color:#151515;transform:scaleX(0.85);transform-origin:0 0">Да/Нет</div>
<div class="a" style="left:137.00px;top:463.00px;font-size:7.7px;line-height:7.7px;color:#151515;transform:scaleX(0.85);transform-origin:0 0">Yes</div>
<div class="a" style="left:0;top:472.69px;width:271px;height:12.37px;background:#ececec;border-top:1px solid #d8d8d8"></div>
<svg class="a" style="left:0.60px;top:474.89px" width="10" height="9.5" viewBox="0 0 10 9.5"><path d="M1.3 0.6h6.2l1.8 1.8v5.6c0 .5-.3.8-.8.8H1.3c-.5 0-.8-.3-.8-.8V1.4c0-.5.3-.8.8-.8z" fill="#b5d3f5" stroke="#6f98cc" stroke-width="0.8"/><path d="M7.3 0.7v1.9h1.9" fill="#fff" stroke="#6f98cc" stroke-width="0.6"/><path d="M2.2 4.6v2.4M3.9 4.6h1.4v1.2h-1.4v1.2h1.4M6.3 4.6h1.4v2.4h-1.4M6.3 5.8h1.4" stroke="#10307a" stroke-width="1.05" fill="none"/></svg>
<div class="a" style="left:13.40px;top:475.37px;font-size:7.7px;line-height:7.7px;color:#151515;transform:scaleX(0.85);transform-origin:0 0">Начало торгов</div>
<div class="a" style="left:137.00px;top:475.37px;font-size:7.7px;line-height:7.7px;color:#151515;transform:scaleX(0.85);transform-origin:0 0">1</div>
<svg class="a" style="left:0.60px;top:487.26px" width="10" height="9.5" viewBox="0 0 10 9.5"><path d="M1.3 0.6h6.2l1.8 1.8v5.6c0 .5-.3.8-.8.8H1.3c-.5 0-.8-.3-.8-.8V1.4c0-.5.3-.8.8-.8z" fill="#b5d3f5" stroke="#6f98cc" stroke-width="0.8"/><path d="M7.3 0.7v1.9h1.9" fill="#fff" stroke="#6f98cc" stroke-width="0.6"/><path d="M2.2 4.6v2.4M3.9 4.6h1.4v1.2h-1.4v1.2h1.4M6.3 4.6h1.4v2.4h-1.4M6.3 5.8h1.4" stroke="#10307a" stroke-width="1.05" fill="none"/></svg>
<div class="a" style="left:13.40px;top:487.74px;font-size:7.7px;line-height:7.7px;color:#151515;transform:scaleX(0.85);transform-origin:0 0">Окончание торгов</div>
<div class="a" style="left:137.00px;top:487.74px;font-size:7.7px;line-height:7.7px;color:#151515;transform:scaleX(0.85);transform-origin:0 0">20</div>
<div class="a" style="left:0;top:497.43px;width:271px;height:12.37px;background:#ececec;border-top:1px solid #d8d8d8"></div>
<svg class="a" style="left:0.60px;top:499.63px" width="10" height="9.5" viewBox="0 0 10 9.5"><path d="M1.3 0.6h6.2l1.8 1.8v5.6c0 .5-.3.8-.8.8H1.3c-.5 0-.8-.3-.8-.8V1.4c0-.5.3-.8.8-.8z" fill="#efe283" stroke="#c2b25a" stroke-width="0.8"/><path d="M7.3 0.7v1.9h1.9" fill="#fff" stroke="#c2b25a" stroke-width="0.6"/><path d="M2.4 3.6h1.4l-1.2 1.3h1.2l-1.4 1.4M5.2 3.6h1.4l-1.2 1.3h1.2l-1.4 1.4" stroke="#5e5412" stroke-width="1.05" fill="none"/></svg>
<div class="a" style="left:13.40px;top:500.11px;font-size:7.7px;line-height:7.7px;color:#151515;transform:scaleX(0.85);transform-origin:0 0">-</div>
<div class="a" style="left:137.00px;top:500.11px;font-size:7.7px;line-height:7.7px;color:#151515;transform:scaleX(0.85);transform-origin:0 0">--------Закрывать сделки в ролловер--------</div>
<svg class="a" style="left:0.60px;top:512.00px" width="10" height="9.5" viewBox="0 0 10 9.5"><path d="M1.3 0.6h6.2l1.8 1.8v5.6c0 .5-.3.8-.8.8H1.3c-.5 0-.8-.3-.8-.8V1.4c0-.5.3-.8.8-.8z" fill="#b5d3f5" stroke="#6f98cc" stroke-width="0.8"/><path d="M7.3 0.7v1.9h1.9" fill="#fff" stroke="#6f98cc" stroke-width="0.6"/><path d="M2.2 4.6v2.4M3.9 4.6h1.4v1.2h-1.4v1.2h1.4M6.3 4.6h1.4v2.4h-1.4M6.3 5.8h1.4" stroke="#10307a" stroke-width="1.05" fill="none"/></svg>
<div class="a" style="left:13.40px;top:512.48px;font-size:7.7px;line-height:7.7px;color:#151515;transform:scaleX(0.85);transform-origin:0 0">Закрывать в это время (Да/Нет)</div>
<div class="a" style="left:137.00px;top:512.48px;font-size:7.7px;line-height:7.7px;color:#151515;transform:scaleX(0.85);transform-origin:0 0">No</div>
<div class="a" style="left:0;top:522.17px;width:271px;height:12.37px;background:#ececec;border-top:1px solid #d8d8d8"></div>
<svg class="a" style="left:0.60px;top:524.37px" width="10" height="9.5" viewBox="0 0 10 9.5"><path d="M1.3 0.6h6.2l1.8 1.8v5.6c0 .5-.3.8-.8.8H1.3c-.5 0-.8-.3-.8-.8V1.4c0-.5.3-.8.8-.8z" fill="#efe283" stroke="#c2b25a" stroke-width="0.8"/><path d="M7.3 0.7v1.9h1.9" fill="#fff" stroke="#c2b25a" stroke-width="0.6"/><path d="M2.4 3.6h1.4l-1.2 1.3h1.2l-1.4 1.4M5.2 3.6h1.4l-1.2 1.3h1.2l-1.4 1.4" stroke="#5e5412" stroke-width="1.05" fill="none"/></svg>
<div class="a" style="left:13.40px;top:524.85px;font-size:7.7px;line-height:7.7px;color:#151515;transform:scaleX(0.85);transform-origin:0 0">Время закрытия всех сделок</div>
<div class="a" style="left:137.00px;top:524.85px;font-size:7.7px;line-height:7.7px;color:#151515;transform:scaleX(0.85);transform-origin:0 0">23.50</div>
<svg class="a" style="left:0.60px;top:536.74px" width="10" height="9.5" viewBox="0 0 10 9.5"><path d="M1.3 0.6h6.2l1.8 1.8v5.6c0 .5-.3.8-.8.8H1.3c-.5 0-.8-.3-.8-.8V1.4c0-.5.3-.8.8-.8z" fill="#efe283" stroke="#c2b25a" stroke-width="0.8"/><path d="M7.3 0.7v1.9h1.9" fill="#fff" stroke="#c2b25a" stroke-width="0.6"/><path d="M2.4 3.6h1.4l-1.2 1.3h1.2l-1.4 1.4M5.2 3.6h1.4l-1.2 1.3h1.2l-1.4 1.4" stroke="#5e5412" stroke-width="1.05" fill="none"/></svg>
<div class="a" style="left:13.40px;top:537.22px;font-size:7.7px;line-height:7.7px;color:#151515;transform:scaleX(0.85);transform-origin:0 0">-</div>
<div class="a" style="left:137.00px;top:537.22px;font-size:7.7px;line-height:7.7px;color:#151515;transform:scaleX(0.85);transform-origin:0 0">---------------------------</div>
<div class="a" style="left:0;top:546.91px;width:271px;height:12.37px;background:#ececec;border-top:1px solid #d8d8d8"></div>
<svg class="a" style="left:0.60px;top:549.11px" width="10" height="9.5" viewBox="0 0 10 9.5"><path d="M1.3 0.6h6.2l1.8 1.8v5.6c0 .5-.3.8-.8.8H1.3c-.5 0-.8-.3-.8-.8V1.4c0-.5.3-.8.8-.8z" fill="#b5d3f5" stroke="#6f98cc" stroke-width="0.8"/><path d="M7.3 0.7v1.9h1.9" fill="#fff" stroke="#6f98cc" stroke-width="0.6"/><path d="M2.2 4.6v2.4M3.9 4.6h1.4v1.2h-1.4v1.2h1.4M6.3 4.6h1.4v2.4h-1.4M6.3 5.8h1.4" stroke="#10307a" stroke-width="1.05" fill="none"/></svg>
<div class="a" style="left:13.40px;top:549.59px;font-size:7.7px;line-height:7.7px;color:#151515;transform:scaleX(0.85);transform-origin:0 0">Панель управления</div>
<div class="a" style="left:137.00px;top:549.59px;font-size:7.7px;line-height:7.7px;color:#151515;transform:scaleX(0.85);transform-origin:0 0">Yes</div>
<div class="a" style="left:134.70px;top:0;width:1px;height:560px;background:#d8d8d8"></div>
<div class="a" style="left:270.10px;top:0;width:12px;height:560px;background:#f0f0f0"></div>
<div class="a" style="left:275.20px;top:11.00px;width:1.5px;height:479px;background:#707070;border-radius:1px"></div>
</div>
<div class="btn" style="left:298px;top:548px;width:64px;height:12px;line-height:10px"><u>L</u>oad</div>
<div class="btn" style="left:298px;top:567.5px;width:64px;height:12.5px;line-height:10.5px"><u>S</u>ave</div>
<div class="btn" style="left:222px;top:591px;width:45px;height:12px;border-color:#3c8ad8;line-height:10px">OK</div>
<div class="btn" style="left:272px;top:591px;width:44.5px;height:12px;line-height:10px">Отмена</div>
<div class="btn" style="left:322px;top:591px;width:44.5px;height:12px;line-height:10px">Reset</div>
</div>
<div class="a" style="left:368px;top:3px;width:5px;height:594px;background:#f9f9f9"></div>
<div class="a" style="left:373px;top:0;width:2px;height:597px;background:#1e2424"></div>
<div class="a" style="left:375px;top:0;width:585px;height:46px;background:#f0f0f0"></div>
<div class="a" style="left:375px;top:13px;width:585px;height:1px;background:#b4b4b4"></div>
<div class="a" style="left:375px;top:29px;width:585px;height:1px;background:#e6e6e6"></div>
<svg class="a" style="left:378px;top:2px" width="9" height="9"><rect x="0.6" y="0.6" width="6.5" height="5.5" fill="#f4f6fa" stroke="#6a7fa5" stroke-width="0.9"/><rect x="2.2" y="3.4" width="6.2" height="5.2" fill="#fff" stroke="#6a7fa5" stroke-width="0.9"/><path d="M3 2.5l1.5 1 1.5-1" stroke="#4a7fd0" stroke-width="0.8" fill="none"/></svg>
<div class="mb" style="left:392.5px">File</div>
<div class="mb" style="left:415px">View</div>
<div class="mb" style="left:441.5px">Insert</div>
<div class="mb" style="left:471px">Charts</div>
<div class="mb" style="left:504px">Tools</div>
<div class="mb" style="left:532px">Window</div>
<div class="mb" style="left:570px">Help</div>
<div class="a" style="left:933px;top:2px;width:12px;height:10px;background:#e6e6e6"></div>
<div class="a" style="left:946px;top:2px;width:14px;height:10px;background:#e6e6e6"></div>
<div class="a" style="left:937px;top:8px;width:4px;height:1px;background:#777"></div>
<svg class="a" style="left:949px;top:4px" width="8" height="6"><path d="M2.5 0.5h4v4M0.5 2.5h4v3.5" fill="none" stroke="#888" stroke-width="1"/></svg>
<svg class="a" style="left:377.5px;top:15px" width="2" height="13"><path d="M1 1v1M1 4v1M1 7v1M1 10v1" stroke="#9a9a9a" stroke-width="1"/></svg>
<svg class="a" style="left:377.5px;top:31px" width="2" height="13"><path d="M1 1v1M1 4v1M1 7v1M1 10v1" stroke="#9a9a9a" stroke-width="1"/></svg>
<svg class="a" style="left:693px;top:15px" width="2" height="13"><path d="M1 1v1M1 4v1M1 7v1M1 10v1" stroke="#9a9a9a" stroke-width="1"/></svg>
<svg class="a" style="left:618.5px;top:31px" width="2" height="13"><path d="M1 1v1M1 4v1M1 7v1M1 10v1" stroke="#9a9a9a" stroke-width="1"/></svg>
<svg class="a" style="left:804px;top:15px" width="2" height="13"><path d="M1 1v1M1 4v1M1 7v1M1 10v1" stroke="#9a9a9a" stroke-width="1"/></svg>
<div class="a" style="left:427.5px;top:15px;width:1px;height:13px;background:#b8b8b8"></div>
<div class="a" style="left:518px;top:15px;width:1px;height:13px;background:#b8b8b8"></div>
<div class="a" style="left:749px;top:15px;width:1px;height:13px;background:#b8b8b8"></div>
<div class="a" style="left:843px;top:15px;width:1px;height:13px;background:#b8b8b8"></div>
<div class="a" style="left:914px;top:15px;width:1px;height:13px;background:#b8b8b8"></div>
<div class="a" style="left:416.5px;top:31px;width:1px;height:13px;background:#b8b8b8"></div>
<div class="a" style="left:778px;top:31px;width:1px;height:13px;background:#b8b8b8"></div>
<svg class="a" style="left:381px;top:16px" width="20" height="12"><rect x="1.5" y="1.5" width="8" height="6" fill="#fff" stroke="#4a6fa5"/><path d="M7.5 3v8M3.5 7h8" stroke="#18b318" stroke-width="2.6"/><path d="M15 6.5l2 2 2-2z" fill="#222"/></svg>
<svg class="a" style="left:404px;top:16px" width="20" height="12"><rect x="1.5" y="1.5" width="7" height="6" fill="#eef" stroke="#5a7fb5"/><rect x="3.5" y="3.5" width="7" height="6" fill="#eef" stroke="#5a7fb5"/><rect x="5" y="5" width="6" height="6" fill="#dde" stroke="#7a8fb5"/><path d="M14 6.5l2 2 2-2z" fill="#222"/></svg>
<svg class="a" style="left:432px;top:16px" width="12" height="12"><rect x="0.5" y="0.5" width="11" height="11" fill="#f4f8fc" stroke="#8fb0d0"/><path d="M3 4l3 3" stroke="#2c9a2c" stroke-width="2"/><path d="M6 7l3 2" stroke="#e03030" stroke-width="2"/></svg>
<svg class="a" style="left:451px;top:16px" width="11" height="11"><path d="M5.5 0.5v10M0.5 5.5h10M3.5 2.5l2-2 2 2M3.5 8.5l2 2 2-2M2.5 3.5l-2 2 2 2M8.5 3.5l2 2-2 2" fill="none" stroke="#333" stroke-width="0.9"/></svg>
<svg class="a" style="left:466px;top:16px" width="13" height="12"><path d="M0.5 2.5h4l1 1h5v6h-10z" fill="#f5d76e" stroke="#c9a83a"/><path d="M4 5.5h4l1 1h3.5v5h-8.5z" fill="#f7de7e" stroke="#c9a83a"/></svg>
<svg class="a" style="left:485px;top:17px" width="11" height="10"><rect x="0.5" y="0.5" width="10" height="9" fill="#fff" stroke="#3d7bc4" stroke-width="1.2"/><rect x="1" y="1" width="2.5" height="8" fill="#6aa0dc"/></svg>
<svg class="a" style="left:503px;top:16px" width="11" height="12"><rect x="0.5" y="0.5" width="7" height="8" fill="#eaf2fb" stroke="#7aa0c8"/><circle cx="5" cy="5" r="2.5" fill="none" stroke="#3d6fb0" stroke-width="1"/><path d="M7 7l3 3" stroke="#c9a23a" stroke-width="1.4"/></svg>
<svg class="a" style="left:525px;top:16px" width="12" height="13"><rect x="0.5" y="0.5" width="7" height="9" fill="#fff" stroke="#777"/><path d="M2 3h4M2 5h4" stroke="#999" stroke-width="0.8"/><path d="M7 6v6M4 9h6" stroke="#18b318" stroke-width="2.2"/></svg>
<div class="a" style="left:538px;top:15.5px;font-size:8.6px;color:#1a1a1a;transform:scaleX(0.86);transform-origin:0 0">New Order</div>
<svg class="a" style="left:580px;top:17px" width="11" height="10"><path d="M0.8 4.5l4-3.5 5.2 4.2-3.2 3.8z" fill="#e9bb3c" stroke="#a9801a" stroke-width="0.7"/><path d="M2 5.5l3.5 2.6" stroke="#f7dc7a" stroke-width="1"/></svg>
<svg class="a" style="left:597px;top:16px" width="12" height="12"><rect x="2" y="1" width="7" height="5" fill="#4aa0e0"/><path d="M1 11v-3h10v3z" fill="#3a7fc0"/><rect x="2" y="9" width="8" height="2" fill="#9ac"/></svg>
<svg class="a" style="left:614px;top:16px" width="12" height="12"><circle cx="6" cy="6" r="5" fill="#bfe0c8" stroke="#8ab0a0"/><path d="M6 3v6" stroke="#2a9a4a" stroke-width="2"/></svg>
<div class="a" style="left:630px;top:14.5px;width:60px;height:14px;background:#fafafa;border:1px solid #d8d8d8"></div>
<svg class="a" style="left:631px;top:16px" width="12" height="12"><path d="M1 5l5-4 5 4v5H1z" fill="#4a9ae0"/><path d="M1 5l5-4 5 4" fill="#e8c040"/><circle cx="8.5" cy="8.5" r="3" fill="#1fb53a"/><path d="M7.5 7v3l2.5-1.5z" fill="#fff"/></svg>
<div class="a" style="left:645px;top:15.5px;font-size:8.6px;color:#1a1a1a;transform:scaleX(0.89);transform-origin:0 0">AutoTrading</div>
<svg class="a" style="left:699px;top:16px" width="10" height="12"><path d="M3 1v10M3 3h-2M3 8h2M7 2v9M7 4h-2M7 9h2M1 11.5h8" stroke="#5a7a3a" stroke-width="1"/></svg>
<div class="a" style="left:713px;top:14.5px;width:16px;height:14px;background:#fafafa;border:1px solid #d8d8d8"></div>
<svg class="a" style="left:716px;top:16px" width="10" height="12"><path d="M5 0v11" stroke="#2a5a2a"/><rect x="3" y="2.5" width="4" height="6" fill="#4ec04e" stroke="#2a5a2a" stroke-width="0.8"/><path d="M1 11.5h8" stroke="#444"/></svg>
<svg class="a" style="left:734px;top:17px" width="11" height="10"><path d="M0.5 8l3-5 3 2 3 3" fill="none" stroke="#4a8a4a" stroke-width="1"/><path d="M0.5 9.5h10" stroke="#555"/></svg>
<svg class="a" style="left:755px;top:16px" width="11" height="12"><circle cx="4.5" cy="4.5" r="3.8" fill="#d8ecff" stroke="#2f7ad0" stroke-width="1.3"/><circle cx="4.5" cy="4.5" r="1.6" fill="#2f7ad0"/><path d="M7.5 7.5l3 3" stroke="#d0a030" stroke-width="1.6"/></svg>
<svg class="a" style="left:772px;top:16px" width="11" height="12"><circle cx="4.5" cy="4.5" r="3.8" fill="#d8ecff" stroke="#2f7ad0" stroke-width="1.3"/><path d="M2.5 4.5h4" stroke="#2f7ad0" stroke-width="1.2"/><path d="M7.5 7.5l3 3" stroke="#d0a030" stroke-width="1.6"/></svg>
<svg class="a" style="left:789px;top:16px" width="11" height="11"><rect x="0.5" y="0.5" width="4.5" height="4.5" fill="#3a9a3a" stroke="#1f5fb0"/><rect x="5.5" y="0.5" width="4.5" height="4.5" fill="#3a7ad0" stroke="#1f5fb0"/><rect x="0.5" y="5.5" width="4.5" height="4.5" fill="#3a7ad0" stroke="#1f5fb0"/><rect x="5.5" y="5.5" width="4.5" height="4.5" fill="#3a9a3a" stroke="#1f5fb0"/></svg>
<div class="a" style="left:808px;top:14.5px;width:16px;height:14px;background:#fafafa;border:1px solid #dcdcdc"></div>
<div class="a" style="left:826px;top:14.5px;width:16px;height:14px;background:#fafafa;border:1px solid #dcdcdc"></div>
<svg class="a" style="left:811px;top:17px" width="10" height="10"><path d="M2 1v8h7" fill="none" stroke="#333" stroke-width="0.9"/><path d="M4 3l3 2-3 2z" fill="#3a9a3a"/></svg>
<svg class="a" style="left:829px;top:17px" width="10" height="10"><path d="M2 1v8h7M4 2v6" fill="none" stroke="#333" stroke-width="0.9"/><path d="M6 3l2.5 2-2.5 2z" fill="#333"/></svg>
<svg class="a" style="left:849px;top:16px" width="20" height="13"><rect x="0.5" y="1.5" width="6" height="8" fill="#fff" stroke="#555"/><path d="M5 6v6M2 9h6" stroke="#18b318" stroke-width="2"/><path d="M13 6.5l2 2 2-2z" fill="#222"/></svg>
<svg class="a" style="left:871px;top:16px" width="20" height="12"><circle cx="5.5" cy="5.5" r="4.6" fill="#fff" stroke="#2a6fc0" stroke-width="1.6"/><path d="M5.5 3v3l2 1" stroke="#2a6fc0" stroke-width="0.9" fill="none"/><path d="M12 6.5l2 2 2-2z" fill="#222"/></svg>
<svg class="a" style="left:894px;top:17px" width="20" height="11"><rect x="0.5" y="0.5" width="10" height="9" fill="#eef4fb" stroke="#3d6fb0"/><path d="M2 4l2-1 2 1 2-1 2 1" stroke="#d04040" stroke-width="0.8" fill="none"/><path d="M2 7h7" stroke="#3a9a3a" stroke-width="0.8"/><path d="M13 6.5l2 2 2-2z" fill="#222"/></svg>
<svg class="a" style="left:934px;top:17px" width="9" height="10"><circle cx="5.5" cy="3.5" r="2.5" fill="#fff" stroke="#2f6fc0" stroke-width="1.1"/><path d="M3.5 5.5l-3 3" stroke="#2f5fb0" stroke-width="1.6"/></svg>
<svg class="a" style="left:951px;top:15px" width="9" height="13"><circle cx="8" cy="6" r="5" fill="#e03a2a"/><path d="M6.5 4h3M8 4v4" stroke="#fff" stroke-width="1"/><path d="M1 10l3-2 2 2" stroke="#bbb" fill="none"/></svg>
<div class="a" style="left:381px;top:31px;width:14px;height:14px;background:#f8f8f8"></div>
<svg class="a" style="left:385px;top:34px" width="7" height="10"><path d="M0.5 0.5v8l2-2 1.5 3 1-0.5-1.5-3h3z" fill="#333"/></svg>
<svg class="a" style="left:400px;top:34px" width="11" height="10"><path d="M5.5 0v10M0.5 5h10" stroke="#444" stroke-width="0.9"/></svg>
<svg class="a" style="left:423px;top:36px" width="10" height="6"><path d="M0.5 5.5l4.5-5 4.5 5z" fill="#777"/></svg>
<svg class="a" style="left:440px;top:36px" width="10" height="6"><rect x="0.5" y="0.5" width="8" height="5" fill="#7a7a7a" stroke="#666"/></svg>
<svg class="a" style="left:457px;top:35.5px" width="11" height="7"><ellipse cx="5.5" cy="3.5" rx="5" ry="3" fill="#7a7a7a"/></svg>
<div class="a" style="left:479px;top:35px;width:1px;height:7px;background:#555"></div>
<div class="a" style="left:494px;top:38.5px;width:7px;height:1px;background:#555"></div>
<svg class="a" style="left:510px;top:34px" width="9" height="9"><path d="M0.5 8.5l8-8" stroke="#555"/></svg>
<svg class="a" style="left:529px;top:33px" width="11" height="11"><path d="M1 7l6-5M3 9l6-5M2 8.5l-1-2M5 9l-1.5-3M7 7l-1.5-3" stroke="#444" stroke-width="0.9" fill="none"/><path d="M9 10.5h2" stroke="#444"/></svg>
<svg class="a" style="left:546px;top:33px" width="10" height="11"><path d="M1 2h8M1 5h8M1 8h3M5 8h4" stroke="#555" stroke-dasharray="1.5 1" stroke-width="0.9"/><path d="M6 8v3" stroke="#444"/></svg>
<div class="a" style="left:566px;top:33px;font-size:8px;color:#444">A</div>
<svg class="a" style="left:581px;top:33px" width="10" height="11"><path d="M1 1h8M1 1v2M9 1v2M5 3v7M3.5 3h3M3.5 10h3" stroke="#555" stroke-width="0.9" fill="none"/></svg>
<svg class="a" style="left:597px;top:34px" width="16" height="10"><path d="M0.5 2l3-1.5v3zM7 7l-3 1.5v-3z" fill="#444"/><path d="M2 2l4 4" stroke="#444" stroke-width="1.5"/><path d="M11.5 5l2 2 2-2z" fill="#222"/></svg>
<div class="a" style="left:622px;top:31px;width:16px;height:14px;background:#fbfbfb;border:1px solid #dcdcdc"></div>
<div class="a" style="left:625px;top:34.5px;font-size:6.6px;color:#555;letter-spacing:-0.2px">M1</div>
<div class="a" style="left:642.5px;top:34.5px;font-size:6.6px;color:#555;letter-spacing:-0.2px">M5</div>
<div class="a" style="left:658.5px;top:34.5px;font-size:6.6px;color:#555;letter-spacing:-0.2px">M15</div>
<div class="a" style="left:675.5px;top:34.5px;font-size:6.6px;color:#555;letter-spacing:-0.2px">M30</div>
<div class="a" style="left:694.5px;top:34.5px;font-size:6.6px;color:#555;letter-spacing:-0.2px">H1</div>
<div class="a" style="left:711px;top:34.5px;font-size:6.6px;color:#555;letter-spacing:-0.2px">H4</div>
<div class="a" style="left:729px;top:34.5px;font-size:6.6px;color:#555;letter-spacing:-0.2px">D1</div>
<div class="a" style="left:746.8px;top:34.5px;font-size:6.6px;color:#555;letter-spacing:-0.2px">W1</div>
<div class="a" style="left:763.6px;top:34.5px;font-size:6.6px;color:#555;letter-spacing:-0.2px">MN</div>
<div class="a" style="left:375px;top:46px;width:585px;height:545px;background:#000"></div>
<div class="a" style="left:378px;top:49px;width:582px;height:1px;background:#a8a8a8"></div>
<div class="a" style="left:378px;top:49px;width:1px;height:530px;background:#5a5a5a"></div>
<div class="a" style="left:378px;top:578px;width:562px;height:1px;background:#d0d0d0"></div>
<div class="a" style="left:939px;top:49px;width:1px;height:530px;background:#e0e0e0"></div>
<svg class="a" style="left:654px;top:49px" width="8" height="5"><path d="M0.5 0.5h7l-3.5 3.5z" fill="#d8d8d8"/></svg>
<svg class="a" style="left:0;top:0" width="960" height="597">
<path d="M379 68.5H939" stroke="#a8142a" stroke-width="1.1" stroke-dasharray="7 3 2 3" stroke-dashoffset="4.5"/>
<path d="M379 107.7H939" stroke="#3c5a40" stroke-width="1.1" stroke-dasharray="7 3 2 3" stroke-dashoffset="4.5"/>
<path d="M379 141.9H939" stroke="#3c5a40" stroke-width="1.1" stroke-dasharray="7 3 2 3" stroke-dashoffset="4.5"/>
<path d="M379 192.2H939" stroke="#3c5a40" stroke-width="1.1" stroke-dasharray="7 3 2 3" stroke-dashoffset="4.5"/>
<path d="M379 211H939" stroke="#c08a3c" stroke-width="1.1" stroke-dasharray="7 3 2 3" stroke-dashoffset="4.5"/>
<path d="M379 261.9H939" stroke="#3c5a40" stroke-width="1.1" stroke-dasharray="7 3 2 3" stroke-dashoffset="4.5"/>
<path d="M379 284.4H939" stroke="#52805a" stroke-width="1.1" stroke-dasharray="7 3 2 3" stroke-dashoffset="4.5"/>
<path d="M379 320.5H939" stroke="#52805a" stroke-width="1.1" stroke-dasharray="7 3 2 3" stroke-dashoffset="4.5"/>
<path d="M379 180.7H939" stroke="#3c3c3c" stroke-width="1"/>
<path d="M381.4 212.4V233.8M383.5 222.1V246.5M387.7 213.5V277.0M389.8 250.9V295.5M391.9 229.8V303.0M394.0 286.8V305.7M396.1 304.7V340.8M398.2 323.4V349.4M400.3 337.3V361.1M402.4 340.6V387.5M408.7 331.1V358.8M412.9 351.2V402.5M415.0 388.9V404.4M417.1 388.0V403.4M421.3 350.7V381.1M423.4 355.1V378.6M427.6 351.5V394.1M438.1 317.0V341.7M440.2 332.7V349.6M448.6 224.1V269.3M450.7 224.6V247.7M454.9 185.1V203.0M457.0 196.0V219.3M459.1 205.2V245.5M463.3 206.3V225.9M465.4 222.0V267.4M467.5 247.6V306.5M469.6 289.2V307.1M473.8 295.0V339.4M480.1 325.2V361.8M482.2 351.5V371.6M484.3 359.5V377.6M488.5 353.4V379.4M490.6 349.3V386.8M492.7 374.2V404.4M494.8 392.6V413.8M496.9 407.2V419.9M499.0 432.8V461.9M501.1 453.7V484.1M503.2 473.0V517.3M505.3 494.2V520.5M507.4 497.5V559.2M509.5 530.0V548.1M513.7 491.7V508.5M515.8 488.9V510.6M517.9 489.4V507.4M522.1 461.7V480.6M526.3 445.3V473.2M528.4 440.2V469.3M532.6 428.4V463.2M536.8 424.2V456.4M538.9 445.5V459.2M557.8 286.5V320.7M559.9 299.7V321.2M566.2 270.3V294.4M568.3 274.6V289.7M570.4 237.7V271.2M572.5 238.2V265.6M574.6 249.8V275.7M576.7 270.5V290.0M580.9 261.7V283.0M587.2 268.2V308.8M589.3 293.5V310.5M591.4 303.0V352.2M593.5 343.6V364.0M595.6 353.1V370.4M601.9 305.6V326.0M604.0 258.9V302.2M606.1 264.9V284.2M610.3 250.1V284.7M612.4 240.7V277.0M614.5 248.1V275.5M618.7 251.4V300.7M620.8 272.5V338.4M625.0 274.0V303.1M627.1 276.5V303.4M629.2 279.1V298.2M633.4 233.0V282.1M639.7 112.9V229.6M643.9 132.0V234.1M646.0 228.0V279.5M648.1 250.3V353.8M650.2 336.3V372.0M654.4 268.4V304.1M621 211V335M507 500V562M636.3 98V260M638.2 110V300" stroke="#e066aa" stroke-width="1"/>
<path d="M379.3 214.2V233.9M385.6 206.3V236.4M404.5 360.8V384.8M406.6 324.8V370.5M410.8 339.2V360.0M419.2 375.5V397.1M425.5 344.6V373.8M429.7 377.2V390.0M431.8 360.8V377.3M433.9 327.4V365.0M436.0 319.7V340.5M442.3 338.7V356.2M444.4 327.2V350.7M446.5 273.3V305.5M452.8 180.9V243.6M461.2 213.1V237.4M471.7 282.4V313.3M475.9 321.0V340.3M478.0 317.5V333.0M486.4 364.8V379.2M511.6 494.2V537.8M520.0 463.6V507.3M524.2 454.8V485.9M530.5 458.5V470.2M534.7 424.7V433.9M541.0 421.5V458.4M543.1 401.2V425.2M545.2 395.7V411.8M547.3 384.4V402.9M549.4 369.0V385.5M551.5 352.3V368.4M553.6 322.9V344.0M555.7 280.9V328.7M562.0 303.9V321.6M564.1 275.9V315.2M578.8 268.8V296.0M583.0 264.4V287.0M585.1 256.9V282.2M597.7 311.5V364.8M599.8 310.0V332.9M608.2 243.0V286.4M616.6 255.8V276.7M622.9 253.6V334.2M631.3 267.0V299.7M635.5 135.6V255.8M637.6 102.5V182.7M641.8 109.6V250.8M652.3 261.7V339.6M656.5 245.0V268.9M634 250V447M641.3 74V210M451 165V230M656.5 181V330M643.5 134V240" stroke="#7d86e0" stroke-width="1"/>
<path d="M413.5 382V410M495.5 388V412" stroke="#3cc03c" stroke-width="1"/>
<path d="M378 393C380.0 391.3 386.2 385.5 390 383C393.8 380.5 396.0 379.2 401 378C406.0 376.8 413.8 376.5 420 376C426.2 375.5 432.2 376.8 438 375C443.8 373.2 449.5 368.5 455 365C460.5 361.5 465.2 355.8 471 354C476.8 352.2 484.3 352.7 490 354C495.7 355.3 500.0 358.5 505 362C510.0 365.5 513.3 371.3 520 375C526.7 378.7 538.3 383.7 545 384C551.7 384.3 551.7 380.8 560 377C568.3 373.2 583.3 365.8 595 361C606.7 356.2 619.7 352.5 630 348C640.3 343.5 652.5 336.3 657 334" fill="none" stroke="#d0d0d0" stroke-width="0.75"/>
</svg>
<svg class="a" style="left:380.4px;top:51.8px" width="5" height="4"><path d="M0 0.3h4.2l-2.1 3.2z" fill="#e8e8e8"/></svg>
<div class="a" style="left:387.70px;top:50.74px;font-size:6.1px;line-height:6.1px;color:#e8e8e8;transform:scaleX(0.92);transform-origin:0 0;">XAUUSD,M1</div>
<div class="a" style="left:426.00px;top:50.74px;font-size:6.1px;line-height:6.1px;color:#e8e8e8;transform:scaleX(0.925);transform-origin:0 0;">3753.81 3754.42 3753.57 3754.42</div>
<div class="a" style="left:382.5px;top:64px;width:2.5px;height:2px;background:#b8b8b8;border-radius:1px"></div>
<div class="a" style="left:382.5px;top:104px;width:2.5px;height:2px;background:#b8b8b8;border-radius:1px"></div>
<div class="a" style="left:382.5px;top:138px;width:2.5px;height:2px;background:#b8b8b8;border-radius:1px"></div>
<div class="a" style="left:384.8px;top:56px;width:37.2px;height:14.8px;background:#808080"></div>
<div class="a" style="left:403.40px;top:60.58px;font-size:9px;line-height:9px;color:#f4f4f4;transform:scaleX(0.87);transform-origin:0 0;transform-origin:50% 0;margin-left:-9px">Hide</div>
<div class="a" style="left:384.8px;top:73.7px;width:61.9px;height:16.2px;background:#008000"></div>
<div class="a" style="left:384.8px;top:79.76px;width:61.9px;text-align:center;font-size:8.2px;line-height:8.2px;color:#f0f0f0"><span style="display:inline-block;transform:scaleX(0.95)">Close BUY</span></div>
<div class="a" style="left:384.8px;top:92.9px;width:61.9px;height:16.2px;background:#ff0000"></div>
<div class="a" style="left:384.8px;top:98.96px;width:61.9px;text-align:center;font-size:8.2px;line-height:8.2px;color:#f0f0f0"><span style="display:inline-block;transform:scaleX(0.95)">Close SELL</span></div>
<div class="a" style="left:384.8px;top:111.4px;width:61.9px;height:16.2px;background:#808080"></div>
<div class="a" style="left:384.8px;top:117.46px;width:61.9px;text-align:center;font-size:8.2px;line-height:8.2px;color:#f0f0f0"><span style="display:inline-block;transform:scaleX(0.95)">Close ALL</span></div>
<div class="a" style="left:384.8px;top:129.9px;width:61.9px;height:16.2px;background:#800080"></div>
<div class="a" style="left:384.8px;top:135.96px;width:61.9px;text-align:center;font-size:8.2px;line-height:8.2px;color:#f0f0f0"><span style="display:inline-block;transform:scaleX(0.95)">Main Panel</span></div>
<div class="a" style="left:384.8px;top:148.4px;width:61.9px;height:16.2px;background:#0000ff"></div>
<div class="a" style="left:384.8px;top:154.46px;width:61.9px;text-align:center;font-size:8.2px;line-height:8.2px;color:#f0f0f0"><span style="display:inline-block;transform:scaleX(0.95)">Info Panel</span></div>
<div class="a" style="left:382.50px;top:185.16px;font-size:6.9px;line-height:6.9px;color:#dcdcdc;transform:scaleX(0.86);transform-origin:0 0;">#962116333 buy 0.10</div>
<div class="a" style="left:382.50px;top:255.16px;font-size:6.9px;line-height:6.9px;color:#dcdcdc;transform:scaleX(0.86);transform-origin:0 0;">#962117513 buy 0.17</div>
<div class="a" style="left:382.50px;top:277.16px;font-size:6.9px;line-height:6.9px;color:#dcdcdc;transform:scaleX(0.86);transform-origin:0 0;">#962118174 buy 0.14</div>
<div class="a" style="left:382.50px;top:313.66px;font-size:6.9px;line-height:6.9px;color:#dcdcdc;transform:scaleX(0.86);transform-origin:0 0;">#962118347 buy 0.23</div>
<div class="a" style="left:382.50px;top:204.16px;font-size:6.9px;line-height:6.9px;color:#dcdcdc;transform:scaleX(0.86);transform-origin:0 0;">#962116<span style="color:#fff">9</span>99 buy 0.13</div>
<div class="a" style="left:382.50px;top:204.16px;font-size:6.9px;line-height:6.9px;color:#fff;font-weight:bold;transform:scaleX(0.8);transform-origin:0 0;">#962116989 a</div>
<div class="a" style="left:656.5px;top:224px;width:6px;height:1px;background:#3fbf3f"></div>
<div class="a" style="left:662.5px;top:221px;width:26.5px;height:8px;border:1px solid #3cc83c;background:#000"></div>
<div class="a" style="left:664.00px;top:222.31px;font-size:6.6px;line-height:6.6px;color:#60e060;transform:scaleX(1.0);transform-origin:0 0;">3753.11</div>
<div class="a" style="left:895.30px;top:51.41px;font-size:6.6px;line-height:6.6px;color:#e8e8e8;transform:scaleX(0.88);transform-origin:0 0;">GoldenTrend</div>
<svg class="a" style="left:928.8px;top:51.8px" width="8" height="8"><path d="M4 0.5c2 0 3.5 1.4 3.5 3.3 0 1.3-.7 2.1-1.4 2.5v1.4H1.9V6.3C1.2 5.9.5 5.1.5 3.8.5 1.9 2 .5 4 .5z" fill="#cfcfcf"/><circle cx="2.7" cy="3.7" r="1.1" fill="#000"/><circle cx="5.3" cy="3.7" r="1.1" fill="#000"/><path d="M4 4.8l-.6 1h1.2z" fill="#000"/></svg>
<div class="a" style="right:32.00px;top:53.97px;font-size:30.6px;line-height:30.6px;color:#1ee81e;font-family:'Liberation Serif',serif;transform:scaleX(1.0);transform-origin:100% 0;-webkit-text-stroke:0.5px #1ee81e">3754.42</div>
<div class="a" style="right:67.30px;top:88.29px;font-size:9.8px;line-height:9.8px;color:#b4b4b4;font-family:'Liberation Serif',serif;transform:scaleX(1.0);transform-origin:100% 0;">Spread</div>
<div class="a" style="right:33.70px;top:88.33px;font-size:10px;line-height:10px;color:#e8902a;font-family:'Liberation Serif',serif;transform:scaleX(0.97);transform-origin:100% 0;">4</div>
<div class="a" style="right:68.50px;top:100.19px;font-size:9.8px;line-height:9.8px;color:#b4b4b4;font-family:'Liberation Serif',serif;transform:scaleX(0.945);transform-origin:100% 0;">Volatility Ratio D1</div>
<div class="a" style="right:33.70px;top:100.22px;font-size:10px;line-height:10px;color:#2ec82e;font-family:'Liberation Serif',serif;transform:scaleX(0.97);transform-origin:100% 0;">.47</div>
<div class="a" style="right:68.50px;top:112.19px;font-size:9.8px;line-height:9.8px;color:#b4b4b4;font-family:'Liberation Serif',serif;transform:scaleX(0.945);transform-origin:100% 0;">Volatility Ratio W1</div>
<div class="a" style="right:33.70px;top:112.22px;font-size:10px;line-height:10px;color:#2ec82e;font-family:'Liberation Serif',serif;transform:scaleX(0.97);transform-origin:100% 0;">687</div>
<div class="a" style="right:67.30px;top:124.89px;font-size:9.8px;line-height:9.8px;color:#b4b4b4;font-family:'Liberation Serif',serif;transform:scaleX(1.0);transform-origin:100% 0;">Lots</div>
<div class="a" style="right:33.70px;top:124.93px;font-size:10px;line-height:10px;color:#e8902a;font-family:'Liberation Serif',serif;transform:scaleX(0.97);transform-origin:100% 0;">0.07</div>
<div class="a" style="right:67.30px;top:137.39px;font-size:9.8px;line-height:9.8px;color:#b4b4b4;font-family:'Liberation Serif',serif;transform:scaleX(1.0);transform-origin:100% 0;">Trailing Stop</div>
<div class="a" style="right:33.70px;top:137.43px;font-size:10px;line-height:10px;color:#2ec82e;font-family:'Liberation Serif',serif;transform:scaleX(0.97);transform-origin:100% 0;">ON</div>
<div class="a" style="right:67.30px;top:149.59px;font-size:9.8px;line-height:9.8px;color:#b4b4b4;font-family:'Liberation Serif',serif;transform:scaleX(1.0);transform-origin:100% 0;">Step</div>
<div class="a" style="right:33.70px;top:149.62px;font-size:10px;line-height:10px;color:#e8902a;font-family:'Liberation Serif',serif;transform:scaleX(0.97);transform-origin:100% 0;">100</div>
<div class="a" style="right:70.40px;top:161.79px;font-size:9.8px;line-height:9.8px;color:#b4b4b4;font-family:'Liberation Serif',serif;transform:scaleX(1.0);transform-origin:100% 0;">Close</div>
<div class="a" style="right:33.70px;top:161.83px;font-size:10px;line-height:10px;color:#e01818;font-family:'Liberation Serif',serif;transform:scaleX(0.97);transform-origin:100% 0;">OFF</div>
<div class="a" style="right:95.40px;top:178.26px;font-size:10.2px;line-height:10.2px;color:#f2f2f2;font-family:'Liberation Serif',serif;transform:scaleX(0.88);transform-origin:100% 0;">Balance:</div>
<div class="a" style="right:34.00px;top:178.26px;font-size:10.2px;line-height:10.2px;color:#f2f2f2;font-family:'Liberation Serif',serif;transform:scaleX(0.95);transform-origin:100% 0;">USD 36455.31</div>
<div class="a" style="right:100.80px;top:193.36px;font-size:10.2px;line-height:10.2px;color:#3cc83c;font-family:'Liberation Serif',serif;transform:scaleX(0.88);transform-origin:100% 0;">Equity:</div>
<div class="a" style="right:34.00px;top:193.36px;font-size:10.2px;line-height:10.2px;color:#3cc83c;font-family:'Liberation Serif',serif;transform:scaleX(0.95);transform-origin:100% 0;">USD 36586.70</div>
<div class="a" style="right:95.40px;top:208.86px;font-size:10.2px;line-height:10.2px;color:#3cc83c;font-family:'Liberation Serif',serif;transform:scaleX(0.88);transform-origin:100% 0;">Open:</div>
<div class="a" style="right:34.00px;top:208.86px;font-size:10.2px;line-height:10.2px;color:#3cc83c;font-family:'Liberation Serif',serif;transform:scaleX(0.95);transform-origin:100% 0;">USD 122.85</div>
<div class="a" style="right:97.40px;top:224.16px;font-size:10.2px;line-height:10.2px;color:#3cc83c;font-family:'Liberation Serif',serif;transform:scaleX(0.88);transform-origin:100% 0;">Today:</div>
<div class="a" style="right:34.00px;top:224.16px;font-size:10.2px;line-height:10.2px;color:#3cc83c;font-family:'Liberation Serif',serif;transform:scaleX(0.95);transform-origin:100% 0;">USD 3889.29</div>
<div class="a" style="right:101.80px;top:239.66px;font-size:10.2px;line-height:10.2px;color:#2ec8d8;font-family:'Liberation Serif',serif;transform:scaleX(0.88);transform-origin:100% 0;">Total:</div>
<div class="a" style="right:34.00px;top:239.66px;font-size:10.2px;line-height:10.2px;color:#2ec8d8;font-family:'Liberation Serif',serif;transform:scaleX(0.95);transform-origin:100% 0;">USD 16501.00</div>
<div class="a" style="right:79.30px;top:255.06px;font-size:10.2px;line-height:10.2px;color:#3cc83c;font-family:'Liberation Serif',serif;transform:scaleX(0.88);transform-origin:100% 0;">Buy:</div>
<div class="a" style="right:34.00px;top:255.06px;font-size:10.2px;line-height:10.2px;color:#3cc83c;font-family:'Liberation Serif',serif;transform:scaleX(0.95);transform-origin:100% 0;">6 (0.77)</div>
<div class="a" style="right:76.70px;top:270.36px;font-size:10.2px;line-height:10.2px;color:#a8a8a8;font-family:'Liberation Serif',serif;transform:scaleX(0.88);transform-origin:100% 0;">Sell:</div>
<div class="a" style="right:34.00px;top:270.36px;font-size:10.2px;line-height:10.2px;color:#a8a8a8;font-family:'Liberation Serif',serif;transform:scaleX(0.95);transform-origin:100% 0;">0 (0.00)</div>
<div class="a" style="left:940px;top:51.0px;width:2px;height:1px;background:#e0e0e0"></div>
<div class="a" style="left:943.00px;top:49.01px;font-size:6.6px;line-height:6.6px;color:#f0f0f0;transform:scaleX(0.9);transform-origin:0 0;">3758.25</div>
<div class="a" style="left:940px;top:72.0px;width:2px;height:1px;background:#e0e0e0"></div>
<div class="a" style="left:943.00px;top:70.01px;font-size:6.6px;line-height:6.6px;color:#f0f0f0;transform:scaleX(0.9);transform-origin:0 0;">3757.65</div>
<div class="a" style="left:940px;top:93.0px;width:2px;height:1px;background:#e0e0e0"></div>
<div class="a" style="left:943.00px;top:91.01px;font-size:6.6px;line-height:6.6px;color:#f0f0f0;transform:scaleX(0.9);transform-origin:0 0;">3757.05</div>
<div class="a" style="left:940px;top:114.0px;width:2px;height:1px;background:#e0e0e0"></div>
<div class="a" style="left:943.00px;top:112.01px;font-size:6.6px;line-height:6.6px;color:#f0f0f0;transform:scaleX(0.9);transform-origin:0 0;">3756.45</div>
<div class="a" style="left:940px;top:135.0px;width:2px;height:1px;background:#e0e0e0"></div>
<div class="a" style="left:943.00px;top:133.01px;font-size:6.6px;line-height:6.6px;color:#f0f0f0;transform:scaleX(0.9);transform-origin:0 0;">3755.75</div>
<div class="a" style="left:940px;top:156.0px;width:2px;height:1px;background:#e0e0e0"></div>
<div class="a" style="left:943.00px;top:154.01px;font-size:6.6px;line-height:6.6px;color:#f0f0f0;transform:scaleX(0.9);transform-origin:0 0;">3755.15</div>
<div class="a" style="left:940px;top:198.0px;width:2px;height:1px;background:#e0e0e0"></div>
<div class="a" style="left:943.00px;top:196.01px;font-size:6.6px;line-height:6.6px;color:#f0f0f0;transform:scaleX(0.9);transform-origin:0 0;">3753.95</div>
<div class="a" style="left:940px;top:219.0px;width:2px;height:1px;background:#e0e0e0"></div>
<div class="a" style="left:943.00px;top:217.01px;font-size:6.6px;line-height:6.6px;color:#f0f0f0;transform:scaleX(0.9);transform-origin:0 0;">3753.25</div>
<div class="a" style="left:940px;top:240.0px;width:2px;height:1px;background:#e0e0e0"></div>
<div class="a" style="left:943.00px;top:238.01px;font-size:6.6px;line-height:6.6px;color:#f0f0f0;transform:scaleX(0.9);transform-origin:0 0;">3752.65</div>
<div class="a" style="left:940px;top:261.0px;width:2px;height:1px;background:#e0e0e0"></div>
<div class="a" style="left:943.00px;top:259.01px;font-size:6.6px;line-height:6.6px;color:#f0f0f0;transform:scaleX(0.9);transform-origin:0 0;">3752.05</div>
<div class="a" style="left:940px;top:282.0px;width:2px;height:1px;background:#e0e0e0"></div>
<div class="a" style="left:943.00px;top:280.01px;font-size:6.6px;line-height:6.6px;color:#f0f0f0;transform:scaleX(0.9);transform-origin:0 0;">3751.45</div>
<div class="a" style="left:940px;top:303.0px;width:2px;height:1px;background:#e0e0e0"></div>
<div class="a" style="left:943.00px;top:301.01px;font-size:6.6px;line-height:6.6px;color:#f0f0f0;transform:scaleX(0.9);transform-origin:0 0;">3750.75</div>
<div class="a" style="left:940px;top:324.0px;width:2px;height:1px;background:#e0e0e0"></div>
<div class="a" style="left:943.00px;top:322.01px;font-size:6.6px;line-height:6.6px;color:#f0f0f0;transform:scaleX(0.9);transform-origin:0 0;">3750.15</div>
<div class="a" style="left:940px;top:345.0px;width:2px;height:1px;background:#e0e0e0"></div>
<div class="a" style="left:943.00px;top:343.01px;font-size:6.6px;line-height:6.6px;color:#f0f0f0;transform:scaleX(0.9);transform-origin:0 0;">3749.55</div>
<div class="a" style="left:940px;top:366.0px;width:2px;height:1px;background:#e0e0e0"></div>
<div class="a" style="left:943.00px;top:364.01px;font-size:6.6px;line-height:6.6px;color:#f0f0f0;transform:scaleX(0.9);transform-origin:0 0;">3748.95</div>
<div class="a" style="left:940px;top:387.0px;width:2px;height:1px;background:#e0e0e0"></div>
<div class="a" style="left:943.00px;top:385.01px;font-size:6.6px;line-height:6.6px;color:#f0f0f0;transform:scaleX(0.9);transform-origin:0 0;">3748.25</div>
<div class="a" style="left:940px;top:408.0px;width:2px;height:1px;background:#e0e0e0"></div>
<div class="a" style="left:943.00px;top:406.01px;font-size:6.6px;line-height:6.6px;color:#f0f0f0;transform:scaleX(0.9);transform-origin:0 0;">3747.65</div>
<div class="a" style="left:940px;top:429.0px;width:2px;height:1px;background:#e0e0e0"></div>
<div class="a" style="left:943.00px;top:427.01px;font-size:6.6px;line-height:6.6px;color:#f0f0f0;transform:scaleX(0.9);transform-origin:0 0;">3747.05</div>
<div class="a" style="left:940px;top:450.0px;width:2px;height:1px;background:#e0e0e0"></div>
<div class="a" style="left:943.00px;top:448.01px;font-size:6.6px;line-height:6.6px;color:#f0f0f0;transform:scaleX(0.9);transform-origin:0 0;">3746.45</div>
<div class="a" style="left:940px;top:471.0px;width:2px;height:1px;background:#e0e0e0"></div>
<div class="a" style="left:943.00px;top:469.01px;font-size:6.6px;line-height:6.6px;color:#f0f0f0;transform:scaleX(0.9);transform-origin:0 0;">3745.75</div>
<div class="a" style="left:940px;top:492.0px;width:2px;height:1px;background:#e0e0e0"></div>
<div class="a" style="left:943.00px;top:490.01px;font-size:6.6px;line-height:6.6px;color:#f0f0f0;transform:scaleX(0.9);transform-origin:0 0;">3745.15</div>
<div class="a" style="left:940px;top:513.0px;width:2px;height:1px;background:#e0e0e0"></div>
<div class="a" style="left:943.00px;top:511.01px;font-size:6.6px;line-height:6.6px;color:#f0f0f0;transform:scaleX(0.9);transform-origin:0 0;">3744.55</div>
<div class="a" style="left:940px;top:534.0px;width:2px;height:1px;background:#e0e0e0"></div>
<div class="a" style="left:943.00px;top:532.01px;font-size:6.6px;line-height:6.6px;color:#f0f0f0;transform:scaleX(0.9);transform-origin:0 0;">3743.95</div>
<div class="a" style="left:940px;top:555.0px;width:2px;height:1px;background:#e0e0e0"></div>
<div class="a" style="left:943.00px;top:553.01px;font-size:6.6px;line-height:6.6px;color:#f0f0f0;transform:scaleX(0.9);transform-origin:0 0;">3743.25</div>
<div class="a" style="left:940px;top:576.0px;width:2px;height:1px;background:#e0e0e0"></div>
<div class="a" style="left:943.00px;top:574.01px;font-size:6.6px;line-height:6.6px;color:#f0f0f0;transform:scaleX(0.9);transform-origin:0 0;">3742.65</div>
<div class="a" style="left:940px;top:177.5px;width:20px;height:6.5px;background:#f4f4f4"></div>
<div class="a" style="left:943.00px;top:177.58px;font-size:6.4px;line-height:6.4px;color:#000;transform:scaleX(0.92);transform-origin:0 0;">3754.42</div>
<div class="a" style="left:377.8px;top:578px;width:1px;height:2.5px;background:#e0e0e0"></div>
<div class="a" style="left:378.30px;top:581.80px;font-size:6.5px;line-height:6.5px;color:#e8e8e8;transform:scaleX(0.87);transform-origin:0 0;">26 Sep 2025</div>
<div class="a" style="left:417.8px;top:578px;width:1px;height:2.5px;background:#e0e0e0"></div>
<div class="a" style="left:418.25px;top:581.80px;font-size:6.5px;line-height:6.5px;color:#e8e8e8;transform:scaleX(0.87);transform-origin:0 0;">26 Sep 12:36</div>
<div class="a" style="left:457.7px;top:578px;width:1px;height:2.5px;background:#e0e0e0"></div>
<div class="a" style="left:458.20px;top:581.80px;font-size:6.5px;line-height:6.5px;color:#e8e8e8;transform:scaleX(0.87);transform-origin:0 0;">26 Sep 13:08</div>
<div class="a" style="left:497.7px;top:578px;width:1px;height:2.5px;background:#e0e0e0"></div>
<div class="a" style="left:498.15px;top:581.80px;font-size:6.5px;line-height:6.5px;color:#e8e8e8;transform:scaleX(0.87);transform-origin:0 0;">26 Sep 13:40</div>
<div class="a" style="left:537.6px;top:578px;width:1px;height:2.5px;background:#e0e0e0"></div>
<div class="a" style="left:538.10px;top:581.80px;font-size:6.5px;line-height:6.5px;color:#e8e8e8;transform:scaleX(0.87);transform-origin:0 0;">26 Sep 14:12</div>
<div class="a" style="left:577.5px;top:578px;width:1px;height:2.5px;background:#e0e0e0"></div>
<div class="a" style="left:578.05px;top:581.80px;font-size:6.5px;line-height:6.5px;color:#e8e8e8;transform:scaleX(0.87);transform-origin:0 0;">26 Sep 14:44</div>
<div class="a" style="left:617.5px;top:578px;width:1px;height:2.5px;background:#e0e0e0"></div>
<div class="a" style="left:618.00px;top:581.80px;font-size:6.5px;line-height:6.5px;color:#e8e8e8;transform:scaleX(0.87);transform-origin:0 0;">26 Sep 15:16</div>
<div class="a" style="left:657.5px;top:578px;width:1px;height:2.5px;background:#e0e0e0"></div>
<div class="a" style="left:657.95px;top:581.80px;font-size:6.5px;line-height:6.5px;color:#e8e8e8;transform:scaleX(0.87);transform-origin:0 0;">26 Sep 15:48</div>
<div class="a" style="right:24.50px;top:567.07px;font-size:7.6px;line-height:7.6px;color:#2ad82a;transform:scaleX(0.985);transform-origin:100% 0;">XAUUSD 1.06 131.39 / ALL 1.06 131.39 / 2025.09.26 15:48:36</div>
<div class="a" style="left:375px;top:591.5px;width:585px;height:6px;background:#f0f0f0"></div>
<div class="a" style="left:376.3px;top:592.5px;width:55.2px;height:5px;background:#e6e6e6;border:1px solid #d2d2d2;border-bottom:none"></div>
<div class="a" style="left:431.5px;top:592.5px;width:53.1px;height:5px;background:#e6e6e6;border:1px solid #d2d2d2;border-bottom:none"></div>
<div class="a" style="left:484.6px;top:591.5px;width:55.2px;height:6px;background:#fff;border:1px solid #d2d2d2;border-bottom:none"></div>
<div class="a" style="left:385.60px;top:595.57px;font-size:7px;line-height:7px;color:#555;transform:scaleX(0.9);transform-origin:0 0;">XAUUSD,M1</div>
<div class="a" style="left:439.50px;top:595.57px;font-size:7px;line-height:7px;color:#555;transform:scaleX(0.9);transform-origin:0 0;">XAUUSD,M1</div>
<div class="a" style="left:494.00px;top:595.57px;font-size:7px;line-height:7px;color:#555;transform:scaleX(0.9);transform-origin:0 0;">XAUUSD,M1</div>
</body></html>
